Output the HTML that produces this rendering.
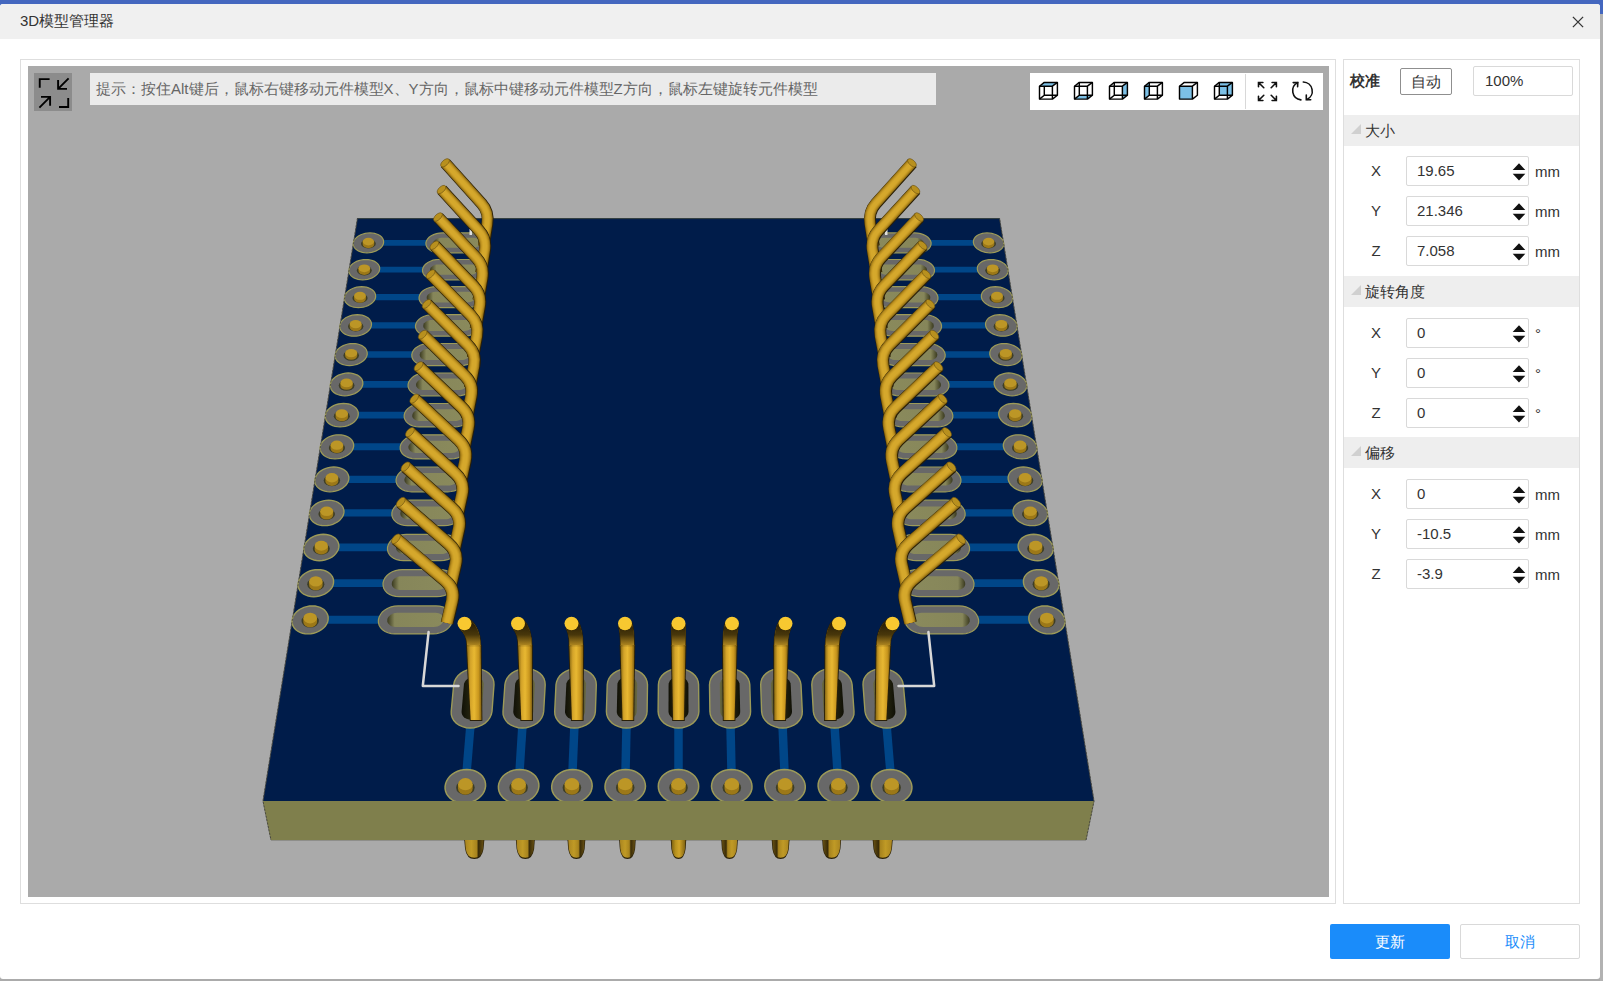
<!DOCTYPE html>
<html><head><meta charset="utf-8">
<style>
*{box-sizing:border-box}
html,body{margin:0;padding:0}
body{width:1603px;height:981px;overflow:hidden;position:relative;background:#ababab;font-family:"Liberation Sans",sans-serif;color:#333}
.abs{position:absolute}
.topbar{left:0;top:0;width:1603px;height:14px;background:#4467bf}
.dialog{left:0;top:4px;width:1600px;height:975px;background:#fff;border-radius:3px;overflow:hidden}
.titlebar{left:0;top:4px;width:1600px;height:34.5px;background:#f0f0f0;border-radius:3px 3px 0 0}
.title{left:20px;top:11px;font-size:15px;line-height:20px;color:#333;white-space:nowrap}
.lpanel{left:20px;top:59px;width:1316px;height:845px;border:1px solid #dedede}
.rpanel{left:1343px;top:59px;width:237px;height:845px;border:1px solid #dedede}
.view{left:28px;top:66px;width:1301px;height:831px;background:#aaaaaa;overflow:hidden}
.hint{left:90px;top:73px;width:846px;height:32px;overflow:hidden;background:#ebebeb;color:#666;font-size:15px;line-height:32px;padding-left:6px;white-space:nowrap}
.shrink{left:34px;top:73px;width:38px;height:38px;background:#8c8c8c}
.tools{left:1030px;top:73px;width:293px;height:37px;background:#fff}
.sep{left:1244.5px;top:74px;width:1.5px;height:35px;background:#d8d8d8}
.hdr{left:1344px;width:235px;height:31px;background:#eeeeee}
.hdrtxt{font-size:15px;line-height:31px;color:#333;white-space:nowrap}
.tri{width:0;height:0;border-left:10px solid transparent;border-bottom:10px solid #d0d0d0}
.lbl{font-size:15px;line-height:30px;color:#333;width:20px;text-align:center}
.inp{left:1406px;width:123px;height:30px;border:1px solid #d9d9d9;border-radius:2px;background:#fff;font-size:15px;line-height:28px;padding-left:10px;color:#333;white-space:nowrap}
.unit{left:1535px;font-size:15px;line-height:30px;color:#333}
.spin{left:1512px;width:15px;height:18px}
.btn1{left:1330px;top:924px;width:120px;height:35px;background:#1a8cfa;border-radius:2px;color:#fff;font-size:15px;line-height:35px;text-align:center}
.btn2{left:1460px;top:924px;width:120px;height:35px;background:#fff;border:1px solid #d9d9d9;border-radius:2px;color:#1a8cfa;font-size:15px;line-height:33px;text-align:center}
</style></head><body>
<div class="abs topbar"></div>
<div class="abs" style="left:1600px;top:14px;width:3px;height:967px;background:#b2b2b2"></div>
<div class="abs dialog"></div>
<div class="abs titlebar"></div>
<div class="abs title">3D模型管理器</div>
<svg class="abs" style="left:1570px;top:14px" width="16" height="16" viewBox="0 0 16 16"><path d="M2.9 2.9 L13.1 13.1 M13.1 2.9 L2.9 13.1" stroke="#333" stroke-width="1.3" fill="none"/></svg>
<div class="abs lpanel"></div>
<div class="abs rpanel"></div>
<div class="abs view"></div>
<svg width="1301" height="831" viewBox="28 66 1301 831" style="position:absolute;left:28px;top:66px"><defs>
<linearGradient id="holeL" x1="0" x2="1" y1="0" y2="0"><stop offset="0" stop-color="#3a3a20"/><stop offset="0.13" stop-color="#86865a"/><stop offset="1" stop-color="#8a8a5c"/></linearGradient>
<linearGradient id="holeR" x1="1" x2="0" y1="0" y2="0"><stop offset="0" stop-color="#3a3a20"/><stop offset="0.13" stop-color="#86865a"/><stop offset="1" stop-color="#8a8a5c"/></linearGradient>
<linearGradient id="holeV" x1="0" x2="1" y1="0" y2="0"><stop offset="0" stop-color="#1a1a08"/><stop offset="0.5" stop-color="#2a2a10"/><stop offset="1" stop-color="#6a6a40"/></linearGradient>
<linearGradient id="pinV" x1="0" x2="1" y1="0" y2="0"><stop offset="0" stop-color="#8a6a12"/><stop offset="0.25" stop-color="#d4a42a"/><stop offset="0.5" stop-color="#e8b832"/><stop offset="0.8" stop-color="#c8961e"/><stop offset="1" stop-color="#80600f"/></linearGradient>
<linearGradient id="pinTop" gradientUnits="userSpaceOnUse" x1="0" y1="624" x2="0" y2="648"><stop offset="0" stop-color="#2a1f06" stop-opacity="1"/><stop offset="0.45" stop-color="#3a2c08" stop-opacity="0.9"/><stop offset="1" stop-color="#3a2c08" stop-opacity="0"/></linearGradient>
<linearGradient id="stubL" x1="0" x2="1" y1="0" y2="0"><stop offset="0" stop-color="#a88420"/><stop offset="0.35" stop-color="#c09a26"/><stop offset="0.62" stop-color="#a8841e"/><stop offset="0.72" stop-color="#3a2c08"/><stop offset="1" stop-color="#6a5212"/></linearGradient>
<linearGradient id="stubR" x1="1" x2="0" y1="0" y2="0"><stop offset="0" stop-color="#a88420"/><stop offset="0.35" stop-color="#c09a26"/><stop offset="0.62" stop-color="#a8841e"/><stop offset="0.72" stop-color="#3a2c08"/><stop offset="1" stop-color="#6a5212"/></linearGradient>
<linearGradient id="stubC" x1="0" x2="1" y1="0" y2="0"><stop offset="0" stop-color="#7a5e10"/><stop offset="0.3" stop-color="#b8921e"/><stop offset="0.55" stop-color="#d0a428"/><stop offset="1" stop-color="#7a5e10"/></linearGradient>
<linearGradient id="hv0" x1="0" x2="1" y1="0" y2="0"><stop offset="0" stop-color="#101006"/><stop offset="0.5" stop-color="#2a2a12"/><stop offset="1" stop-color="#6a6a42"/></linearGradient><linearGradient id="hv1" x1="0" x2="1" y1="0" y2="0"><stop offset="0" stop-color="#101006"/><stop offset="0.5" stop-color="#2a2a12"/><stop offset="1" stop-color="#6a6a42"/></linearGradient><linearGradient id="hv2" x1="0" x2="1" y1="0" y2="0"><stop offset="0" stop-color="#101006"/><stop offset="0.5" stop-color="#2a2a12"/><stop offset="1" stop-color="#6a6a42"/></linearGradient><linearGradient id="hv3" x1="0" x2="1" y1="0" y2="0"><stop offset="0" stop-color="#101006"/><stop offset="0.5" stop-color="#2a2a12"/><stop offset="1" stop-color="#6a6a42"/></linearGradient><linearGradient id="hv4" x1="0" x2="1" y1="0" y2="0"><stop offset="0" stop-color="#101006"/><stop offset="0.5" stop-color="#2a2a12"/><stop offset="1" stop-color="#101006"/></linearGradient><linearGradient id="hv5" x1="0" x2="1" y1="0" y2="0"><stop offset="0" stop-color="#6a6a42"/><stop offset="0.5" stop-color="#2a2a12"/><stop offset="1" stop-color="#101006"/></linearGradient><linearGradient id="hv6" x1="0" x2="1" y1="0" y2="0"><stop offset="0" stop-color="#6a6a42"/><stop offset="0.5" stop-color="#2a2a12"/><stop offset="1" stop-color="#101006"/></linearGradient><linearGradient id="hv7" x1="0" x2="1" y1="0" y2="0"><stop offset="0" stop-color="#6a6a42"/><stop offset="0.5" stop-color="#2a2a12"/><stop offset="1" stop-color="#101006"/></linearGradient><linearGradient id="hv8" x1="0" x2="1" y1="0" y2="0"><stop offset="0" stop-color="#6a6a42"/><stop offset="0.5" stop-color="#2a2a12"/><stop offset="1" stop-color="#101006"/></linearGradient></defs><path d="M357.5 218.1 L999.5 218.1 L1094 801 L263 801Z" fill="#001c4a"/><path d="M263 801 L1094 801 L1086 840 L271 840Z" fill="#7f7f4c"/><path d="M357.5 218.1 L263 801 L271 840 L1086 840 L1094 801 L999.5 218.1" fill="none" stroke="#4a4a3a" stroke-width="0.8" opacity="0.7"/><line x1="358" y1="218.6" x2="999" y2="218.6" stroke="#485040" stroke-width="1" opacity="0.8"/><line x1="368.4" y1="242.8" x2="457.5" y2="242.8" stroke="#004688" stroke-width="5.7"/><line x1="364.3" y1="269.6" x2="454.5" y2="269.6" stroke="#004688" stroke-width="5.9"/><line x1="360" y1="297.1" x2="451.5" y2="297.1" stroke="#004688" stroke-width="6.1"/><line x1="355.7" y1="325.4" x2="448.4" y2="325.4" stroke="#004688" stroke-width="6.2"/><line x1="351.2" y1="354.5" x2="445.2" y2="354.5" stroke="#004688" stroke-width="6.4"/><line x1="346.6" y1="384.4" x2="441.9" y2="384.4" stroke="#004688" stroke-width="6.6"/><line x1="341.8" y1="415.1" x2="438.5" y2="415.1" stroke="#004688" stroke-width="6.8"/><line x1="336.9" y1="446.7" x2="435" y2="446.7" stroke="#004688" stroke-width="7"/><line x1="331.9" y1="479.3" x2="431.4" y2="479.3" stroke="#004688" stroke-width="7.2"/><line x1="326.7" y1="512.9" x2="427.7" y2="512.9" stroke="#004688" stroke-width="7.4"/><line x1="321.3" y1="547.4" x2="423.9" y2="547.4" stroke="#004688" stroke-width="7.6"/><line x1="315.8" y1="583.1" x2="420" y2="583.1" stroke="#004688" stroke-width="7.9"/><line x1="310.2" y1="619.8" x2="415.9" y2="619.8" stroke="#004688" stroke-width="8.1"/><line x1="988.6" y1="242.8" x2="899.5" y2="242.8" stroke="#004688" stroke-width="5.7"/><line x1="992.7" y1="269.6" x2="902.5" y2="269.6" stroke="#004688" stroke-width="5.9"/><line x1="997" y1="297.1" x2="905.5" y2="297.1" stroke="#004688" stroke-width="6.1"/><line x1="1001.3" y1="325.4" x2="908.6" y2="325.4" stroke="#004688" stroke-width="6.2"/><line x1="1005.8" y1="354.5" x2="911.8" y2="354.5" stroke="#004688" stroke-width="6.4"/><line x1="1010.4" y1="384.4" x2="915.1" y2="384.4" stroke="#004688" stroke-width="6.6"/><line x1="1015.2" y1="415.1" x2="918.5" y2="415.1" stroke="#004688" stroke-width="6.8"/><line x1="1020.1" y1="446.7" x2="922" y2="446.7" stroke="#004688" stroke-width="7"/><line x1="1025.1" y1="479.3" x2="925.6" y2="479.3" stroke="#004688" stroke-width="7.2"/><line x1="1030.3" y1="512.9" x2="929.3" y2="512.9" stroke="#004688" stroke-width="7.4"/><line x1="1035.7" y1="547.4" x2="933.1" y2="547.4" stroke="#004688" stroke-width="7.6"/><line x1="1041.2" y1="583.1" x2="937" y2="583.1" stroke="#004688" stroke-width="7.9"/><line x1="1046.8" y1="619.8" x2="941.1" y2="619.8" stroke="#004688" stroke-width="8.1"/><line x1="472.7" y1="698" x2="465.4" y2="786.2" stroke="#004688" stroke-width="8.5"/><line x1="524.2" y1="698" x2="518.6" y2="786.2" stroke="#004688" stroke-width="8.5"/><line x1="575.6" y1="698" x2="571.9" y2="786.2" stroke="#004688" stroke-width="8.5"/><line x1="627.1" y1="698" x2="625.2" y2="786.2" stroke="#004688" stroke-width="8.5"/><line x1="678.5" y1="698" x2="678.5" y2="786.2" stroke="#004688" stroke-width="8.5"/><line x1="729.9" y1="698" x2="731.8" y2="786.2" stroke="#004688" stroke-width="8.5"/><line x1="781.4" y1="698" x2="785.1" y2="786.2" stroke="#004688" stroke-width="8.5"/><line x1="832.8" y1="698" x2="838.4" y2="786.2" stroke="#004688" stroke-width="8.5"/><line x1="884.3" y1="698" x2="891.6" y2="786.2" stroke="#004688" stroke-width="8.5"/><path d="M383.6 242.8 L383.2 244.4 L382.4 245.9 L381.3 247.3 L379.8 248.7 L378.1 249.8 L376.1 250.9 L374 251.7 L371.7 252.3 L369.3 252.6 L366.9 252.8 L364.5 252.6 L362.3 252.3 L360.2 251.7 L358.3 250.9 L356.6 249.8 L355.2 248.7 L354.2 247.3 L353.5 245.9 L353.2 244.4 L353.3 242.8 L353.7 241.2 L354.5 239.7 L355.7 238.3 L357.1 237 L358.9 235.8 L360.8 234.8 L363 234 L365.2 233.4 L367.6 233 L370 232.9 L372.3 233 L374.6 233.4 L376.6 234 L378.5 234.8 L380.2 235.8 L381.6 237 L382.6 238.3 L383.3 239.7 L383.6 241.2Z" fill="#686868" stroke="#9c9a58" stroke-width="1.2"/><ellipse cx="368.4" cy="243.7" rx="7.4" ry="4.7" fill="#3e3e26"/><path d="M362.7 241.6 L362.7 244.3 A5.7 3.8 0 0 0 374.2 244.3 L374.2 241.6 Z" fill="#9c7818"/><ellipse cx="368.4" cy="241.6" rx="5.7" ry="3.8" fill="#bc9626"/><path d="M442.2 232.9 L439.3 233.1 L436.4 233.7 L433.6 234.6 L431.2 235.8 L429.1 237.3 L427.5 239 L426.4 240.9 L425.9 242.8 L426 244.7 L426.6 246.6 L427.8 248.3 L429.5 249.8 L431.6 251.1 L434.1 252 L436.9 252.6 L439.9 252.8 L472.2 252.8 L475.2 252.6 L478.1 252 L480.8 251.1 L483.3 249.8 L485.3 248.3 L486.9 246.6 L487.9 244.7 L488.4 242.8 L488.3 240.9 L487.6 239 L486.3 237.3 L484.6 235.8 L482.4 234.6 L479.9 233.7 L477.2 233.1 L474.2 232.9Z" fill="#686868" stroke="#9c9a58" stroke-width="1.2"/><path d="M441.6 237.8 L440.1 237.9 L438.7 238.2 L437.3 238.6 L436.1 239.3 L435 240 L434.2 240.9 L433.6 241.8 L433.4 242.8 L433.4 243.8 L433.7 244.7 L434.3 245.6 L435.2 246.4 L436.3 247 L437.6 247.5 L439 247.7 L440.5 247.8 L472.7 247.8 L474.2 247.7 L475.7 247.5 L477.1 247 L478.3 246.4 L479.3 245.6 L480.1 244.7 L480.7 243.8 L480.9 242.8 L480.8 241.8 L480.5 240.9 L479.9 240 L479 239.3 L477.9 238.6 L476.6 238.2 L475.2 237.9 L473.7 237.8Z" fill="url(#holeL)"/><path d="M379.6 269.6 L379.2 271.2 L378.4 272.8 L377.3 274.2 L375.8 275.6 L374.1 276.8 L372.1 277.9 L369.9 278.7 L367.6 279.3 L365.1 279.7 L362.7 279.8 L360.3 279.7 L358 279.3 L355.9 278.7 L354 277.9 L352.3 276.8 L350.9 275.6 L349.9 274.2 L349.2 272.8 L348.9 271.2 L349 269.6 L349.4 268 L350.2 266.5 L351.4 265 L352.8 263.6 L354.6 262.4 L356.6 261.4 L358.8 260.6 L361.1 260 L363.5 259.6 L365.9 259.5 L368.2 259.6 L370.5 260 L372.6 260.6 L374.6 261.4 L376.2 262.4 L377.6 263.6 L378.7 265 L379.4 266.5 L379.7 268Z" fill="#686868" stroke="#9c9a58" stroke-width="1.2"/><ellipse cx="364.3" cy="270.6" rx="7.5" ry="4.8" fill="#3e3e26"/><path d="M358.5 268.3 L358.5 271.1 A5.8 3.9 0 0 0 370.1 271.1 L370.1 268.3 Z" fill="#9c7818"/><ellipse cx="364.3" cy="268.3" rx="5.8" ry="3.9" fill="#bc9626"/><path d="M439.1 259.5 L436.1 259.7 L433.1 260.2 L430.4 261.2 L427.9 262.4 L425.8 264 L424.2 265.7 L423.1 267.6 L422.5 269.6 L422.6 271.6 L423.2 273.5 L424.4 275.3 L426.1 276.8 L428.3 278.1 L430.9 279.1 L433.7 279.6 L436.7 279.8 L469.4 279.8 L472.5 279.6 L475.4 279.1 L478.2 278.1 L480.6 276.8 L482.7 275.3 L484.3 273.5 L485.3 271.6 L485.8 269.6 L485.7 267.6 L485 265.7 L483.8 264 L482 262.4 L479.8 261.2 L477.3 260.2 L474.5 259.7 L471.5 259.5Z" fill="#686868" stroke="#9c9a58" stroke-width="1.2"/><path d="M438.5 264.5 L437 264.5 L435.5 264.8 L434.1 265.3 L432.8 266 L431.8 266.7 L430.9 267.6 L430.4 268.6 L430.1 269.6 L430.1 270.6 L430.5 271.6 L431.1 272.5 L431.9 273.3 L433 273.9 L434.3 274.4 L435.8 274.7 L437.3 274.8 L470 274.8 L471.5 274.7 L473 274.4 L474.4 273.9 L475.6 273.3 L476.7 272.5 L477.5 271.6 L478 270.6 L478.3 269.6 L478.2 268.6 L477.9 267.6 L477.2 266.7 L476.3 266 L475.2 265.3 L473.9 264.8 L472.5 264.5 L471 264.5Z" fill="url(#holeL)"/><path d="M375.6 297.1 L375.2 298.8 L374.4 300.4 L373.2 301.9 L371.7 303.3 L369.9 304.6 L367.9 305.6 L365.7 306.5 L363.3 307.1 L360.9 307.5 L358.4 307.6 L356 307.5 L353.7 307.1 L351.5 306.5 L349.5 305.6 L347.9 304.6 L346.5 303.3 L345.4 301.9 L344.7 300.4 L344.4 298.8 L344.5 297.1 L344.9 295.5 L345.8 293.9 L346.9 292.4 L348.4 291 L350.2 289.7 L352.2 288.7 L354.4 287.8 L356.8 287.2 L359.2 286.8 L361.7 286.7 L364.1 286.8 L366.4 287.2 L368.5 287.8 L370.5 288.7 L372.1 289.7 L373.5 291 L374.6 292.4 L375.3 293.9 L375.6 295.5Z" fill="#686868" stroke="#9c9a58" stroke-width="1.2"/><ellipse cx="360" cy="298.1" rx="7.6" ry="4.9" fill="#3e3e26"/><path d="M354.1 295.8 L354.1 298.7 A5.9 4 0 0 0 365.9 298.7 L365.9 295.8 Z" fill="#9c7818"/><ellipse cx="360" cy="295.8" rx="5.9" ry="4" fill="#bc9626"/><path d="M435.9 286.7 L432.8 286.9 L429.8 287.5 L427 288.5 L424.5 289.7 L422.4 291.3 L420.7 293.1 L419.6 295.1 L419.1 297.1 L419.1 299.2 L419.7 301.1 L421 303 L422.7 304.6 L424.9 305.9 L427.5 306.8 L430.3 307.4 L433.4 307.6 L466.6 307.6 L469.7 307.4 L472.7 306.8 L475.4 305.9 L477.9 304.6 L480 303 L481.7 301.1 L482.7 299.2 L483.2 297.1 L483.1 295.1 L482.4 293.1 L481.2 291.3 L479.4 289.7 L477.2 288.5 L474.6 287.5 L471.7 286.9 L468.7 286.7Z" fill="#686868" stroke="#9c9a58" stroke-width="1.2"/><path d="M435.2 291.8 L433.7 291.9 L432.2 292.2 L430.8 292.7 L429.5 293.4 L428.4 294.2 L427.6 295.1 L427 296.1 L426.7 297.1 L426.8 298.2 L427.1 299.2 L427.7 300.1 L428.6 300.9 L429.7 301.5 L431 302 L432.5 302.3 L434 302.4 L467.1 302.4 L468.7 302.3 L470.2 302 L471.6 301.5 L472.9 300.9 L473.9 300.1 L474.7 299.2 L475.3 298.2 L475.5 297.1 L475.5 296.1 L475.1 295.1 L474.5 294.2 L473.6 293.4 L472.5 292.7 L471.2 292.2 L469.7 291.9 L468.2 291.8Z" fill="url(#holeL)"/><path d="M371.4 325.4 L371 327.1 L370.2 328.7 L369 330.3 L367.5 331.7 L365.7 333 L363.6 334.1 L361.4 335 L359 335.7 L356.5 336.1 L354 336.2 L351.5 336.1 L349.2 335.7 L347 335 L345 334.1 L343.3 333 L341.9 331.7 L340.8 330.3 L340.1 328.7 L339.8 327.1 L339.9 325.4 L340.4 323.7 L341.2 322.1 L342.4 320.5 L343.9 319.1 L345.7 317.8 L347.8 316.7 L350 315.9 L352.4 315.2 L354.9 314.8 L357.3 314.7 L359.8 314.8 L362.1 315.2 L364.3 315.9 L366.2 316.7 L368 317.8 L369.4 319.1 L370.4 320.5 L371.2 322.1 L371.5 323.7Z" fill="#686868" stroke="#9c9a58" stroke-width="1.2"/><ellipse cx="355.7" cy="326.4" rx="7.7" ry="5.1" fill="#3e3e26"/><path d="M349.7 324.1 L349.7 327 A6 4.1 0 0 0 361.7 327 L361.7 324.1 Z" fill="#9c7818"/><ellipse cx="355.7" cy="324.1" rx="6" ry="4.1" fill="#bc9626"/><path d="M432.5 314.7 L429.5 314.9 L426.4 315.5 L423.6 316.5 L421.1 317.8 L418.9 319.4 L417.2 321.3 L416.1 323.3 L415.5 325.4 L415.5 327.5 L416.2 329.5 L417.4 331.4 L419.2 333 L421.4 334.4 L424 335.4 L426.9 336 L430 336.2 L463.7 336.2 L466.8 336 L469.8 335.4 L472.6 334.4 L475.2 333 L477.3 331.4 L478.9 329.5 L480 327.5 L480.5 325.4 L480.4 323.3 L479.7 321.3 L478.5 319.4 L476.7 317.8 L474.4 316.5 L471.8 315.5 L468.9 314.9 L465.9 314.7Z" fill="#686868" stroke="#9c9a58" stroke-width="1.2"/><path d="M431.9 320 L430.3 320.1 L428.8 320.4 L427.4 320.9 L426.1 321.6 L425 322.4 L424.1 323.3 L423.6 324.3 L423.3 325.4 L423.3 326.5 L423.6 327.5 L424.3 328.4 L425.2 329.3 L426.3 329.9 L427.6 330.4 L429.1 330.8 L430.6 330.9 L464.2 330.9 L465.8 330.8 L467.3 330.4 L468.8 329.9 L470 329.3 L471.1 328.4 L471.9 327.5 L472.5 326.5 L472.8 325.4 L472.7 324.3 L472.4 323.3 L471.7 322.4 L470.8 321.6 L469.7 320.9 L468.3 320.4 L466.9 320.1 L465.3 320Z" fill="url(#holeL)"/><path d="M367.2 354.5 L366.7 356.2 L365.9 357.9 L364.7 359.5 L363.1 361 L361.3 362.3 L359.2 363.5 L356.9 364.4 L354.5 365 L352 365.5 L349.5 365.6 L347 365.5 L344.6 365 L342.4 364.4 L340.3 363.5 L338.6 362.3 L337.2 361 L336.1 359.5 L335.4 357.9 L335.1 356.2 L335.2 354.5 L335.7 352.7 L336.5 351.1 L337.7 349.5 L339.3 348 L341.1 346.7 L343.2 345.6 L345.5 344.7 L347.9 344 L350.4 343.6 L352.9 343.5 L355.3 343.6 L357.7 344 L359.9 344.7 L361.9 345.6 L363.6 346.7 L365.1 348 L366.2 349.5 L366.9 351.1 L367.2 352.7Z" fill="#686868" stroke="#9c9a58" stroke-width="1.2"/><ellipse cx="351.2" cy="355.5" rx="7.8" ry="5.2" fill="#3e3e26"/><path d="M345.1 353.1 L345.1 356.1 A6.1 4.2 0 0 0 357.2 356.1 L357.2 353.1 Z" fill="#9c7818"/><ellipse cx="351.2" cy="353.1" rx="6.1" ry="4.2" fill="#bc9626"/><path d="M429.1 343.5 L426 343.7 L422.9 344.3 L420.1 345.3 L417.5 346.7 L415.3 348.3 L413.6 350.2 L412.4 352.3 L411.8 354.5 L411.9 356.6 L412.5 358.7 L413.8 360.6 L415.5 362.3 L417.8 363.7 L420.5 364.7 L423.4 365.4 L426.5 365.6 L460.7 365.6 L463.8 365.4 L466.9 364.7 L469.8 363.7 L472.3 362.3 L474.5 360.6 L476.2 358.7 L477.3 356.6 L477.8 354.5 L477.7 352.3 L477 350.2 L475.7 348.3 L473.9 346.7 L471.6 345.3 L468.9 344.3 L466 343.7 L462.9 343.5Z" fill="#686868" stroke="#9c9a58" stroke-width="1.2"/><path d="M428.5 348.9 L426.9 349 L425.3 349.3 L423.9 349.8 L422.6 350.5 L421.5 351.4 L420.6 352.3 L420 353.4 L419.7 354.5 L419.8 355.6 L420.1 356.6 L420.7 357.6 L421.6 358.4 L422.8 359.1 L424.1 359.7 L425.6 360 L427.2 360.1 L461.2 360.1 L462.8 360 L464.4 359.7 L465.8 359.1 L467.1 358.4 L468.2 357.6 L469.1 356.6 L469.6 355.6 L469.9 354.5 L469.8 353.4 L469.5 352.3 L468.8 351.4 L467.9 350.5 L466.8 349.8 L465.4 349.3 L463.9 349 L462.4 348.9Z" fill="url(#holeL)"/><path d="M362.8 384.4 L362.3 386.1 L361.5 387.9 L360.2 389.5 L358.7 391.1 L356.8 392.4 L354.7 393.6 L352.4 394.5 L349.9 395.2 L347.4 395.7 L344.8 395.8 L342.3 395.7 L339.8 395.2 L337.6 394.5 L335.6 393.6 L333.8 392.4 L332.4 391.1 L331.3 389.5 L330.6 387.9 L330.3 386.1 L330.3 384.4 L330.8 382.6 L331.7 380.8 L332.9 379.2 L334.5 377.7 L336.4 376.3 L338.5 375.2 L340.8 374.3 L343.2 373.6 L345.8 373.2 L348.3 373 L350.8 373.2 L353.2 373.6 L355.4 374.3 L357.5 375.2 L359.2 376.3 L360.7 377.7 L361.8 379.2 L362.5 380.8 L362.8 382.6Z" fill="#686868" stroke="#9c9a58" stroke-width="1.3"/><ellipse cx="346.6" cy="385.4" rx="7.9" ry="5.3" fill="#3e3e26"/><path d="M340.4 382.9 L340.4 386.1 A6.2 4.3 0 0 0 352.7 386.1 L352.7 382.9 Z" fill="#9c7818"/><ellipse cx="346.6" cy="382.9" rx="6.2" ry="4.3" fill="#bc9626"/><path d="M425.6 373 L422.5 373.3 L419.4 373.9 L416.4 374.9 L413.8 376.3 L411.6 378.1 L409.9 380 L408.7 382.1 L408.1 384.4 L408.1 386.6 L408.8 388.7 L410 390.7 L411.8 392.4 L414.1 393.9 L416.8 394.9 L419.8 395.6 L422.9 395.8 L457.6 395.8 L460.8 395.6 L463.9 394.9 L466.8 393.9 L469.4 392.4 L471.6 390.7 L473.3 388.7 L474.4 386.6 L474.9 384.4 L474.8 382.1 L474.1 380 L472.8 378.1 L471 376.3 L468.7 374.9 L466 373.9 L463 373.3 L459.9 373Z" fill="#686868" stroke="#9c9a58" stroke-width="1.2"/><path d="M425 378.6 L423.4 378.7 L421.8 379.1 L420.3 379.6 L419 380.3 L417.8 381.2 L417 382.2 L416.4 383.2 L416.1 384.4 L416.1 385.5 L416.4 386.6 L417.1 387.6 L418 388.4 L419.1 389.2 L420.5 389.7 L422 390 L423.6 390.1 L458.1 390.1 L459.8 390 L461.3 389.7 L462.8 389.2 L464.1 388.4 L465.2 387.6 L466.1 386.6 L466.7 385.5 L466.9 384.4 L466.9 383.2 L466.5 382.2 L465.9 381.2 L464.9 380.3 L463.8 379.6 L462.4 379.1 L460.9 378.7 L459.3 378.6Z" fill="url(#holeL)"/><path d="M358.2 415.1 L357.8 416.9 L356.9 418.7 L355.7 420.4 L354.1 422 L352.2 423.4 L350 424.6 L347.7 425.6 L345.2 426.3 L342.6 426.7 L340 426.9 L337.4 426.7 L335 426.3 L332.7 425.6 L330.6 424.6 L328.8 423.4 L327.4 422 L326.3 420.4 L325.6 418.7 L325.3 416.9 L325.4 415.1 L325.9 413.3 L326.7 411.5 L328 409.8 L329.6 408.2 L331.5 406.9 L333.6 405.7 L336 404.7 L338.5 404 L341 403.6 L343.6 403.5 L346.1 403.6 L348.6 404 L350.8 404.7 L352.9 405.7 L354.7 406.9 L356.1 408.2 L357.2 409.8 L358 411.5 L358.3 413.3Z" fill="#686868" stroke="#9c9a58" stroke-width="1.3"/><ellipse cx="341.8" cy="416.2" rx="8" ry="5.5" fill="#3e3e26"/><path d="M335.6 413.6 L335.6 416.9 A6.2 4.4 0 0 0 348 416.9 L348 413.6 Z" fill="#9c7818"/><ellipse cx="341.8" cy="413.6" rx="6.2" ry="4.4" fill="#bc9626"/><path d="M422 403.5 L418.8 403.7 L415.7 404.3 L412.7 405.4 L410 406.9 L407.8 408.6 L406 410.6 L404.8 412.8 L404.2 415.1 L404.2 417.4 L404.9 419.6 L406.2 421.6 L408 423.4 L410.3 424.9 L413 426 L416.1 426.6 L419.3 426.9 L454.4 426.9 L457.6 426.6 L460.8 426 L463.8 424.9 L466.4 423.4 L468.6 421.6 L470.4 419.6 L471.5 417.4 L472 415.1 L471.9 412.8 L471.2 410.6 L469.9 408.6 L468 406.9 L465.7 405.4 L463 404.3 L459.9 403.7 L456.8 403.5Z" fill="#686868" stroke="#9c9a58" stroke-width="1.2"/><path d="M421.3 409.2 L419.7 409.3 L418.1 409.6 L416.6 410.2 L415.3 410.9 L414.1 411.8 L413.2 412.8 L412.6 413.9 L412.3 415.1 L412.3 416.3 L412.7 417.4 L413.3 418.4 L414.2 419.3 L415.4 420 L416.8 420.6 L418.3 420.9 L419.9 421 L455 421 L456.6 420.9 L458.2 420.6 L459.7 420 L461.1 419.3 L462.2 418.4 L463.1 417.4 L463.6 416.3 L463.9 415.1 L463.9 413.9 L463.5 412.8 L462.8 411.8 L461.9 410.9 L460.7 410.2 L459.3 409.6 L457.8 409.3 L456.2 409.2Z" fill="url(#holeL)"/><path d="M353.6 446.7 L353.1 448.6 L352.2 450.5 L351 452.2 L349.4 453.8 L347.4 455.3 L345.2 456.5 L342.9 457.5 L340.3 458.3 L337.7 458.7 L335 458.9 L332.4 458.7 L329.9 458.3 L327.6 457.5 L325.5 456.5 L323.7 455.3 L322.3 453.8 L321.2 452.2 L320.4 450.5 L320.1 448.6 L320.2 446.7 L320.7 444.9 L321.6 443 L322.9 441.3 L324.5 439.7 L326.5 438.3 L328.6 437 L331 436.1 L333.5 435.3 L336.1 434.9 L338.8 434.8 L341.3 434.9 L343.8 435.3 L346.1 436.1 L348.2 437 L350 438.3 L351.5 439.7 L352.6 441.3 L353.3 443 L353.7 444.9Z" fill="#686868" stroke="#9c9a58" stroke-width="1.3"/><ellipse cx="336.9" cy="447.9" rx="8.1" ry="5.6" fill="#3e3e26"/><path d="M330.6 445.2 L330.6 448.5 A6.3 4.6 0 0 0 343.2 448.5 L343.2 445.2 Z" fill="#9c7818"/><ellipse cx="336.9" cy="445.2" rx="6.3" ry="4.6" fill="#bc9626"/><path d="M418.3 434.8 L415.1 435 L411.9 435.7 L408.9 436.8 L406.2 438.3 L403.9 440.1 L402.1 442.1 L400.8 444.4 L400.2 446.7 L400.2 449.1 L400.9 451.4 L402.2 453.5 L404 455.3 L406.4 456.8 L409.2 457.9 L412.2 458.6 L415.5 458.9 L451.1 458.9 L454.4 458.6 L457.6 457.9 L460.6 456.8 L463.3 455.3 L465.6 453.5 L467.3 451.4 L468.5 449.1 L469 446.7 L468.9 444.4 L468.2 442.1 L466.9 440.1 L465 438.3 L462.6 436.8 L459.8 435.7 L456.8 435 L453.6 434.8Z" fill="#686868" stroke="#9c9a58" stroke-width="1.2"/><path d="M417.6 440.7 L416 440.8 L414.3 441.1 L412.8 441.7 L411.4 442.4 L410.3 443.4 L409.4 444.4 L408.8 445.6 L408.4 446.7 L408.5 447.9 L408.8 449.1 L409.5 450.1 L410.4 451.1 L411.6 451.8 L413 452.4 L414.5 452.7 L416.2 452.9 L451.7 452.9 L453.4 452.7 L455 452.4 L456.5 451.8 L457.9 451.1 L459 450.1 L459.9 449.1 L460.5 447.9 L460.8 446.7 L460.8 445.6 L460.4 444.4 L459.7 443.4 L458.8 442.4 L457.6 441.7 L456.1 441.1 L454.6 440.8 L453 440.7Z" fill="url(#holeL)"/><path d="M348.8 479.3 L348.3 481.3 L347.4 483.2 L346.1 485 L344.5 486.6 L342.5 488.1 L340.3 489.4 L337.9 490.4 L335.3 491.2 L332.6 491.6 L329.9 491.8 L327.3 491.6 L324.8 491.2 L322.4 490.4 L320.3 489.4 L318.5 488.1 L317 486.6 L315.9 485 L315.1 483.2 L314.8 481.3 L314.9 479.3 L315.5 477.4 L316.4 475.5 L317.7 473.7 L319.3 472 L321.3 470.6 L323.5 469.3 L325.9 468.3 L328.5 467.6 L331.1 467.1 L333.8 467 L336.4 467.1 L338.9 467.6 L341.2 468.3 L343.3 469.3 L345.1 470.6 L346.7 472 L347.8 473.7 L348.5 475.5 L348.9 477.4Z" fill="#686868" stroke="#9c9a58" stroke-width="1.3"/><ellipse cx="331.9" cy="480.5" rx="8.2" ry="5.8" fill="#3e3e26"/><path d="M325.4 477.8 L325.4 481.2 A6.4 4.7 0 0 0 338.3 481.2 L338.3 477.8 Z" fill="#9c7818"/><ellipse cx="331.9" cy="477.8" rx="6.4" ry="4.7" fill="#bc9626"/><path d="M414.5 467 L411.2 467.2 L407.9 467.9 L404.9 469 L402.2 470.6 L399.8 472.4 L398 474.6 L396.7 476.9 L396.1 479.3 L396.1 481.7 L396.8 484.1 L398.1 486.2 L400 488.1 L402.4 489.7 L405.2 490.8 L408.3 491.5 L411.6 491.8 L447.7 491.8 L451.1 491.5 L454.3 490.8 L457.4 489.7 L460.1 488.1 L462.4 486.2 L464.2 484.1 L465.4 481.7 L465.9 479.3 L465.8 476.9 L465.1 474.6 L463.8 472.4 L461.8 470.6 L459.4 469 L456.6 467.9 L453.5 467.2 L450.3 467Z" fill="#686868" stroke="#9c9a58" stroke-width="1.2"/><path d="M413.8 473 L412.1 473.2 L410.5 473.5 L408.9 474.1 L407.5 474.9 L406.3 475.8 L405.4 476.9 L404.8 478.1 L404.5 479.3 L404.5 480.5 L404.8 481.7 L405.5 482.8 L406.4 483.8 L407.6 484.5 L409.1 485.1 L410.6 485.5 L412.3 485.6 L448.4 485.6 L450.1 485.5 L451.7 485.1 L453.3 484.5 L454.6 483.8 L455.8 482.8 L456.7 481.7 L457.3 480.5 L457.6 479.3 L457.5 478.1 L457.2 476.9 L456.5 475.8 L455.5 474.9 L454.3 474.1 L452.9 473.5 L451.3 473.2 L449.7 473Z" fill="url(#holeL)"/><path d="M343.9 512.9 L343.4 514.9 L342.4 516.8 L341.1 518.7 L339.5 520.4 L337.5 521.9 L335.2 523.2 L332.8 524.3 L330.1 525.1 L327.4 525.5 L324.7 525.7 L322 525.5 L319.5 525.1 L317.1 524.3 L314.9 523.2 L313.1 521.9 L311.6 520.4 L310.4 518.7 L309.7 516.8 L309.4 514.9 L309.5 512.9 L310 510.9 L311 508.9 L312.3 507.1 L314 505.4 L316 503.9 L318.2 502.6 L320.7 501.5 L323.3 500.8 L326 500.3 L328.7 500.2 L331.3 500.3 L333.8 500.8 L336.2 501.5 L338.3 502.6 L340.2 503.9 L341.7 505.4 L342.9 507.1 L343.6 508.9 L344 510.9Z" fill="#686868" stroke="#9c9a58" stroke-width="1.3"/><ellipse cx="326.7" cy="514.1" rx="8.3" ry="5.9" fill="#3e3e26"/><path d="M320.2 511.3 L320.2 514.8 A6.5 4.8 0 0 0 333.2 514.8 L333.2 511.3 Z" fill="#9c7818"/><ellipse cx="326.7" cy="511.3" rx="6.5" ry="4.8" fill="#bc9626"/><path d="M410.6 500.2 L407.2 500.4 L403.9 501.1 L400.8 502.3 L398 503.9 L395.7 505.8 L393.8 508 L392.5 510.4 L391.9 512.9 L391.9 515.4 L392.6 517.8 L393.9 520 L395.8 521.9 L398.2 523.5 L401.1 524.7 L404.2 525.5 L407.5 525.7 L444.3 525.7 L447.7 525.5 L451 524.7 L454.1 523.5 L456.9 521.9 L459.2 520 L461 517.8 L462.2 515.4 L462.8 512.9 L462.7 510.4 L461.9 508 L460.5 505.8 L458.6 503.9 L456.2 502.3 L453.3 501.1 L450.2 500.4 L446.9 500.2Z" fill="#686868" stroke="#9c9a58" stroke-width="1.2"/><path d="M409.8 506.4 L408.1 506.5 L406.5 506.9 L404.9 507.5 L403.5 508.3 L402.3 509.3 L401.3 510.4 L400.7 511.6 L400.4 512.9 L400.4 514.1 L400.7 515.3 L401.4 516.5 L402.4 517.4 L403.6 518.3 L405 518.9 L406.6 519.2 L408.3 519.3 L444.9 519.3 L446.6 519.2 L448.3 518.9 L449.9 518.3 L451.3 517.4 L452.5 516.5 L453.4 515.3 L454 514.1 L454.3 512.9 L454.2 511.6 L453.9 510.4 L453.2 509.3 L452.2 508.3 L451 507.5 L449.5 506.9 L447.9 506.5 L446.2 506.4Z" fill="url(#holeL)"/><path d="M338.8 547.4 L338.3 549.5 L337.3 551.5 L336 553.4 L334.3 555.2 L332.3 556.8 L330 558.1 L327.5 559.2 L324.8 560 L322.1 560.5 L319.3 560.7 L316.6 560.5 L314 560 L311.6 559.2 L309.4 558.1 L307.5 556.8 L306 555.2 L304.8 553.4 L304.1 551.5 L303.8 549.5 L303.9 547.4 L304.4 545.4 L305.4 543.4 L306.8 541.5 L308.5 539.7 L310.5 538.1 L312.8 536.8 L315.3 535.7 L317.9 535 L320.6 534.5 L323.4 534.3 L326.1 534.5 L328.6 535 L331 535.7 L333.2 536.8 L335.1 538.1 L336.6 539.7 L337.8 541.5 L338.5 543.4 L338.9 545.4Z" fill="#686868" stroke="#9c9a58" stroke-width="1.4"/><ellipse cx="321.3" cy="548.7" rx="8.5" ry="6.1" fill="#3e3e26"/><path d="M314.7 545.8 L314.7 549.4 A6.6 5 0 0 0 328 549.4 L328 545.8 Z" fill="#9c7818"/><ellipse cx="321.3" cy="545.8" rx="6.6" ry="5" fill="#bc9626"/><path d="M406.5 534.3 L403.1 534.6 L399.8 535.3 L396.6 536.5 L393.8 538.1 L391.4 540.1 L389.5 542.4 L388.2 544.9 L387.5 547.4 L387.5 550 L388.2 552.5 L389.6 554.8 L391.5 556.8 L393.9 558.4 L396.8 559.7 L400 560.4 L403.4 560.7 L440.7 560.7 L444.1 560.4 L447.5 559.7 L450.7 558.4 L453.5 556.8 L455.8 554.8 L457.7 552.5 L458.9 550 L459.5 547.4 L459.4 544.9 L458.6 542.4 L457.2 540.1 L455.3 538.1 L452.8 536.5 L449.9 535.3 L446.7 534.6 L443.4 534.3Z" fill="#686868" stroke="#9c9a58" stroke-width="1.2"/><path d="M405.8 540.8 L404 540.9 L402.3 541.3 L400.7 541.9 L399.3 542.7 L398.1 543.7 L397.1 544.9 L396.5 546.1 L396.1 547.4 L396.2 548.7 L396.5 550 L397.2 551.1 L398.2 552.1 L399.4 553 L400.9 553.6 L402.5 554 L404.2 554.1 L441.4 554.1 L443.1 554 L444.8 553.6 L446.4 553 L447.8 552.1 L449 551.1 L450 550 L450.6 548.7 L450.9 547.4 L450.8 546.1 L450.5 544.9 L449.8 543.7 L448.8 542.7 L447.5 541.9 L446 541.3 L444.4 540.9 L442.7 540.8Z" fill="url(#holeL)"/><path d="M333.5 583.1 L333 585.2 L332.1 587.3 L330.7 589.2 L329 591.1 L326.9 592.7 L324.6 594.1 L322 595.2 L319.3 596 L316.5 596.5 L313.7 596.7 L311 596.5 L308.3 596 L305.9 595.2 L303.7 594.1 L301.8 592.7 L300.2 591.1 L299.1 589.2 L298.3 587.3 L298 585.2 L298.1 583.1 L298.7 580.9 L299.7 578.9 L301 576.9 L302.8 575.1 L304.8 573.5 L307.2 572.1 L309.7 571 L312.4 570.2 L315.1 569.7 L317.9 569.6 L320.6 569.7 L323.3 570.2 L325.7 571 L327.9 572.1 L329.8 573.5 L331.3 575.1 L332.5 576.9 L333.3 578.9 L333.6 580.9Z" fill="#686868" stroke="#9c9a58" stroke-width="1.4"/><ellipse cx="315.8" cy="584.3" rx="8.6" ry="6.3" fill="#3e3e26"/><path d="M309.1 581.4 L309.1 585.1 A6.7 5.2 0 0 0 322.6 585.1 L322.6 581.4 Z" fill="#9c7818"/><ellipse cx="315.8" cy="581.4" rx="6.7" ry="5.2" fill="#bc9626"/><path d="M402.4 569.6 L398.9 569.8 L395.5 570.6 L392.3 571.8 L389.4 573.5 L387 575.5 L385 577.9 L383.7 580.4 L383 583.1 L383.1 585.7 L383.7 588.3 L385.1 590.6 L387 592.7 L389.5 594.4 L392.5 595.7 L395.7 596.4 L399.1 596.7 L437 596.7 L440.5 596.4 L443.9 595.7 L447.1 594.4 L450 592.7 L452.4 590.6 L454.3 588.3 L455.5 585.7 L456.1 583.1 L456 580.4 L455.3 577.9 L453.8 575.5 L451.8 573.5 L449.3 571.8 L446.4 570.6 L443.2 569.8 L439.8 569.6Z" fill="#686868" stroke="#9c9a58" stroke-width="1.2"/><path d="M401.6 576.2 L399.8 576.3 L398.1 576.7 L396.5 577.3 L395 578.2 L393.8 579.2 L392.8 580.4 L392.1 581.7 L391.8 583.1 L391.8 584.4 L392.1 585.7 L392.8 586.9 L393.8 587.9 L395.1 588.8 L396.6 589.4 L398.2 589.8 L399.9 589.9 L437.7 589.9 L439.5 589.8 L441.2 589.4 L442.8 588.8 L444.3 587.9 L445.5 586.9 L446.4 585.7 L447.1 584.4 L447.4 583.1 L447.3 581.7 L446.9 580.4 L446.2 579.2 L445.2 578.2 L444 577.3 L442.5 576.7 L440.8 576.3 L439.1 576.2Z" fill="url(#holeL)"/><path d="M328.1 619.8 L327.6 622 L326.6 624.1 L325.2 626.2 L323.5 628.1 L321.4 629.7 L319 631.2 L316.4 632.3 L313.7 633.2 L310.8 633.7 L308 633.9 L305.2 633.7 L302.5 633.2 L300 632.3 L297.8 631.2 L295.8 629.7 L294.3 628.1 L293.1 626.2 L292.3 624.1 L292 622 L292.2 619.8 L292.7 617.6 L293.7 615.5 L295.1 613.5 L296.9 611.6 L299 609.9 L301.4 608.5 L303.9 607.4 L306.7 606.6 L309.5 606 L312.3 605.9 L315.1 606 L317.7 606.6 L320.2 607.4 L322.4 608.5 L324.3 609.9 L325.9 611.6 L327.1 613.5 L327.9 615.5 L328.2 617.6Z" fill="#686868" stroke="#9c9a58" stroke-width="1.4"/><ellipse cx="310.2" cy="621.1" rx="8.7" ry="6.5" fill="#3e3e26"/><path d="M303.3 618.1 L303.3 621.9 A6.8 5.3 0 0 0 317 621.9 L317 618.1 Z" fill="#9c7818"/><ellipse cx="310.2" cy="618.1" rx="6.8" ry="5.3" fill="#bc9626"/><path d="M398.1 605.9 L394.5 606.1 L391.1 606.9 L387.8 608.2 L384.9 609.9 L382.4 612 L380.5 614.5 L379.1 617.1 L378.4 619.8 L378.4 622.5 L379.1 625.2 L380.5 627.6 L382.5 629.7 L385 631.5 L387.9 632.8 L391.2 633.6 L394.7 633.9 L433.2 633.9 L436.7 633.6 L440.2 632.8 L443.5 631.5 L446.4 629.7 L448.8 627.6 L450.7 625.2 L452 622.5 L452.6 619.8 L452.5 617.1 L451.8 614.5 L450.3 612 L448.3 609.9 L445.8 608.2 L442.8 606.9 L439.5 606.1 L436.1 605.9Z" fill="#686868" stroke="#9c9a58" stroke-width="1.2"/><path d="M397.2 612.7 L395.5 612.9 L393.7 613.3 L392.1 613.9 L390.6 614.8 L389.3 615.9 L388.3 617.1 L387.6 618.4 L387.3 619.8 L387.3 621.2 L387.7 622.5 L388.4 623.7 L389.4 624.8 L390.6 625.7 L392.1 626.4 L393.8 626.8 L395.6 626.9 L433.9 626.9 L435.7 626.8 L437.5 626.4 L439.1 625.7 L440.6 624.8 L441.8 623.7 L442.8 622.5 L443.4 621.2 L443.7 619.8 L443.7 618.4 L443.3 617.1 L442.6 615.9 L441.6 614.8 L440.3 613.9 L438.8 613.3 L437.1 612.9 L435.4 612.7Z" fill="url(#holeL)"/><path d="M1003.7 242.8 L1003.8 244.4 L1003.5 245.9 L1002.8 247.3 L1001.8 248.7 L1000.4 249.8 L998.7 250.9 L996.8 251.7 L994.7 252.3 L992.5 252.6 L990.1 252.8 L987.7 252.6 L985.3 252.3 L983 251.7 L980.9 250.9 L978.9 249.8 L977.2 248.7 L975.7 247.3 L974.6 245.9 L973.8 244.4 L973.4 242.8 L973.4 241.2 L973.7 239.7 L974.4 238.3 L975.4 237 L976.8 235.8 L978.5 234.8 L980.4 234 L982.4 233.4 L984.7 233 L987 232.9 L989.4 233 L991.8 233.4 L994 234 L996.2 234.8 L998.1 235.8 L999.9 237 L1001.3 238.3 L1002.5 239.7 L1003.3 241.2Z" fill="#686868" stroke="#9c9a58" stroke-width="1.2"/><ellipse cx="988.6" cy="243.7" rx="7.4" ry="4.7" fill="#3e3e26"/><path d="M982.8 241.6 L982.8 244.3 A5.7 3.8 0 0 0 994.3 244.3 L994.3 241.6 Z" fill="#9c7818"/><ellipse cx="988.6" cy="241.6" rx="5.7" ry="3.8" fill="#bc9626"/><path d="M882.8 232.9 L879.8 233.1 L877.1 233.7 L874.6 234.6 L872.4 235.8 L870.7 237.3 L869.4 239 L868.7 240.9 L868.6 242.8 L869.1 244.7 L870.1 246.6 L871.7 248.3 L873.7 249.8 L876.2 251.1 L878.9 252 L881.8 252.6 L884.8 252.8 L917.1 252.8 L920.1 252.6 L922.9 252 L925.4 251.1 L927.5 249.8 L929.2 248.3 L930.4 246.6 L931 244.7 L931.1 242.8 L930.6 240.9 L929.5 239 L927.9 237.3 L925.8 235.8 L923.4 234.6 L920.6 233.7 L917.7 233.1 L914.8 232.9Z" fill="#686868" stroke="#9c9a58" stroke-width="1.2"/><path d="M883.3 237.8 L881.8 237.9 L880.4 238.2 L879.1 238.6 L878 239.3 L877.1 240 L876.5 240.9 L876.2 241.8 L876.1 242.8 L876.3 243.8 L876.9 244.7 L877.7 245.6 L878.7 246.4 L879.9 247 L881.3 247.5 L882.8 247.7 L884.3 247.8 L916.5 247.8 L918 247.7 L919.4 247.5 L920.7 247 L921.8 246.4 L922.7 245.6 L923.3 244.7 L923.6 243.8 L923.6 242.8 L923.4 241.8 L922.8 240.9 L922 240 L920.9 239.3 L919.7 238.6 L918.3 238.2 L916.9 237.9 L915.4 237.8Z" fill="url(#holeR)"/><path d="M1008 269.6 L1008.1 271.2 L1007.8 272.8 L1007.1 274.2 L1006.1 275.6 L1004.7 276.8 L1003 277.9 L1001.1 278.7 L999 279.3 L996.7 279.7 L994.3 279.8 L991.9 279.7 L989.4 279.3 L987.1 278.7 L984.9 277.9 L982.9 276.8 L981.2 275.6 L979.7 274.2 L978.6 272.8 L977.8 271.2 L977.4 269.6 L977.3 268 L977.6 266.5 L978.3 265 L979.4 263.6 L980.8 262.4 L982.4 261.4 L984.4 260.6 L986.5 260 L988.8 259.6 L991.1 259.5 L993.5 259.6 L995.9 260 L998.2 260.6 L1000.4 261.4 L1002.4 262.4 L1004.2 263.6 L1005.6 265 L1006.8 266.5 L1007.6 268Z" fill="#686868" stroke="#9c9a58" stroke-width="1.2"/><ellipse cx="992.7" cy="270.6" rx="7.5" ry="4.8" fill="#3e3e26"/><path d="M986.9 268.3 L986.9 271.1 A5.8 3.9 0 0 0 998.5 271.1 L998.5 268.3 Z" fill="#9c7818"/><ellipse cx="992.7" cy="268.3" rx="5.8" ry="3.9" fill="#bc9626"/><path d="M885.5 259.5 L882.5 259.7 L879.7 260.2 L877.2 261.2 L875 262.4 L873.2 264 L872 265.7 L871.3 267.6 L871.2 269.6 L871.7 271.6 L872.7 273.5 L874.3 275.3 L876.4 276.8 L878.8 278.1 L881.6 279.1 L884.5 279.6 L887.6 279.8 L920.3 279.8 L923.3 279.6 L926.1 279.1 L928.7 278.1 L930.9 276.8 L932.6 275.3 L933.8 273.5 L934.4 271.6 L934.5 269.6 L933.9 267.6 L932.8 265.7 L931.2 264 L929.1 262.4 L926.6 261.2 L923.9 260.2 L920.9 259.7 L917.9 259.5Z" fill="#686868" stroke="#9c9a58" stroke-width="1.2"/><path d="M886 264.5 L884.5 264.5 L883.1 264.8 L881.8 265.3 L880.7 266 L879.8 266.7 L879.1 267.6 L878.8 268.6 L878.7 269.6 L879 270.6 L879.5 271.6 L880.3 272.5 L881.4 273.3 L882.6 273.9 L884 274.4 L885.5 274.7 L887 274.8 L919.7 274.8 L921.2 274.7 L922.7 274.4 L924 273.9 L925.1 273.3 L925.9 272.5 L926.5 271.6 L926.9 270.6 L926.9 269.6 L926.6 268.6 L926.1 267.6 L925.2 266.7 L924.2 266 L922.9 265.3 L921.5 264.8 L920 264.5 L918.5 264.5Z" fill="url(#holeR)"/><path d="M1012.5 297.1 L1012.6 298.8 L1012.3 300.4 L1011.6 301.9 L1010.5 303.3 L1009.1 304.6 L1007.5 305.6 L1005.5 306.5 L1003.3 307.1 L1001 307.5 L998.6 307.6 L996.1 307.5 L993.7 307.1 L991.3 306.5 L989.1 305.6 L987.1 304.6 L985.3 303.3 L983.8 301.9 L982.6 300.4 L981.8 298.8 L981.4 297.1 L981.4 295.5 L981.7 293.9 L982.4 292.4 L983.5 291 L984.9 289.7 L986.5 288.7 L988.5 287.8 L990.6 287.2 L992.9 286.8 L995.3 286.7 L997.8 286.8 L1000.2 287.2 L1002.6 287.8 L1004.8 288.7 L1006.8 289.7 L1008.6 291 L1010.1 292.4 L1011.2 293.9 L1012.1 295.5Z" fill="#686868" stroke="#9c9a58" stroke-width="1.2"/><ellipse cx="997" cy="298.1" rx="7.6" ry="4.9" fill="#3e3e26"/><path d="M991.1 295.8 L991.1 298.7 A5.9 4 0 0 0 1002.9 298.7 L1002.9 295.8 Z" fill="#9c7818"/><ellipse cx="997" cy="295.8" rx="5.9" ry="4" fill="#bc9626"/><path d="M888.3 286.7 L885.3 286.9 L882.4 287.5 L879.8 288.5 L877.6 289.7 L875.8 291.3 L874.6 293.1 L873.9 295.1 L873.8 297.1 L874.3 299.2 L875.3 301.1 L877 303 L879.1 304.6 L881.6 305.9 L884.3 306.8 L887.3 307.4 L890.4 307.6 L923.6 307.6 L926.7 307.4 L929.5 306.8 L932.1 305.9 L934.3 304.6 L936 303 L937.3 301.1 L937.9 299.2 L937.9 297.1 L937.4 295.1 L936.3 293.1 L934.6 291.3 L932.5 289.7 L930 288.5 L927.2 287.5 L924.2 286.9 L921.1 286.7Z" fill="#686868" stroke="#9c9a58" stroke-width="1.2"/><path d="M888.8 291.8 L887.3 291.9 L885.8 292.2 L884.5 292.7 L883.4 293.4 L882.5 294.2 L881.9 295.1 L881.5 296.1 L881.5 297.1 L881.7 298.2 L882.3 299.2 L883.1 300.1 L884.1 300.9 L885.4 301.5 L886.8 302 L888.3 302.3 L889.9 302.4 L923 302.4 L924.5 302.3 L926 302 L927.3 301.5 L928.4 300.9 L929.3 300.1 L929.9 299.2 L930.2 298.2 L930.3 297.1 L930 296.1 L929.4 295.1 L928.6 294.2 L927.5 293.4 L926.2 292.7 L924.8 292.2 L923.3 291.9 L921.8 291.8Z" fill="url(#holeR)"/><path d="M1017.1 325.4 L1017.2 327.1 L1016.9 328.7 L1016.2 330.3 L1015.1 331.7 L1013.7 333 L1012 334.1 L1010 335 L1007.8 335.7 L1005.5 336.1 L1003 336.2 L1000.5 336.1 L998 335.7 L995.6 335 L993.4 334.1 L991.3 333 L989.5 331.7 L988 330.3 L986.8 328.7 L986 327.1 L985.6 325.4 L985.5 323.7 L985.8 322.1 L986.6 320.5 L987.6 319.1 L989 317.8 L990.8 316.7 L992.7 315.9 L994.9 315.2 L997.2 314.8 L999.7 314.7 L1002.1 314.8 L1004.6 315.2 L1007 315.9 L1009.2 316.7 L1011.3 317.8 L1013.1 319.1 L1014.6 320.5 L1015.8 322.1 L1016.6 323.7Z" fill="#686868" stroke="#9c9a58" stroke-width="1.2"/><ellipse cx="1001.3" cy="326.4" rx="7.7" ry="5.1" fill="#3e3e26"/><path d="M995.3 324.1 L995.3 327 A6 4.1 0 0 0 1007.3 327 L1007.3 324.1 Z" fill="#9c7818"/><ellipse cx="1001.3" cy="324.1" rx="6" ry="4.1" fill="#bc9626"/><path d="M891.1 314.7 L888.1 314.9 L885.2 315.5 L882.6 316.5 L880.3 317.8 L878.5 319.4 L877.3 321.3 L876.6 323.3 L876.5 325.4 L877 327.5 L878.1 329.5 L879.7 331.4 L881.8 333 L884.4 334.4 L887.2 335.4 L890.2 336 L893.3 336.2 L927 336.2 L930.1 336 L933 335.4 L935.6 334.4 L937.8 333 L939.6 331.4 L940.8 329.5 L941.5 327.5 L941.5 325.4 L940.9 323.3 L939.8 321.3 L938.1 319.4 L935.9 317.8 L933.4 316.5 L930.6 315.5 L927.5 314.9 L924.5 314.7Z" fill="#686868" stroke="#9c9a58" stroke-width="1.2"/><path d="M891.7 320 L890.1 320.1 L888.7 320.4 L887.3 320.9 L886.2 321.6 L885.3 322.4 L884.6 323.3 L884.3 324.3 L884.2 325.4 L884.5 326.5 L885.1 327.5 L885.9 328.4 L887 329.3 L888.2 329.9 L889.7 330.4 L891.2 330.8 L892.8 330.9 L926.4 330.9 L927.9 330.8 L929.4 330.4 L930.7 329.9 L931.8 329.3 L932.7 328.4 L933.4 327.5 L933.7 326.5 L933.7 325.4 L933.4 324.3 L932.9 323.3 L932 322.4 L930.9 321.6 L929.6 320.9 L928.2 320.4 L926.7 320.1 L925.1 320Z" fill="url(#holeR)"/><path d="M1021.8 354.5 L1021.9 356.2 L1021.6 357.9 L1020.9 359.5 L1019.8 361 L1018.4 362.3 L1016.7 363.5 L1014.6 364.4 L1012.4 365 L1010 365.5 L1007.5 365.6 L1005 365.5 L1002.5 365 L1000.1 364.4 L997.8 363.5 L995.7 362.3 L993.9 361 L992.3 359.5 L991.1 357.9 L990.3 356.2 L989.8 354.5 L989.8 352.7 L990.1 351.1 L990.8 349.5 L991.9 348 L993.4 346.7 L995.1 345.6 L997.1 344.7 L999.3 344 L1001.7 343.6 L1004.1 343.5 L1006.6 343.6 L1009.1 344 L1011.5 344.7 L1013.8 345.6 L1015.9 346.7 L1017.7 348 L1019.3 349.5 L1020.5 351.1 L1021.3 352.7Z" fill="#686868" stroke="#9c9a58" stroke-width="1.2"/><ellipse cx="1005.8" cy="355.5" rx="7.8" ry="5.2" fill="#3e3e26"/><path d="M999.8 353.1 L999.8 356.1 A6.1 4.2 0 0 0 1011.9 356.1 L1011.9 353.1 Z" fill="#9c7818"/><ellipse cx="1005.8" cy="353.1" rx="6.1" ry="4.2" fill="#bc9626"/><path d="M894.1 343.5 L891 343.7 L888.1 344.3 L885.4 345.3 L883.1 346.7 L881.3 348.3 L880 350.2 L879.3 352.3 L879.2 354.5 L879.7 356.6 L880.8 358.7 L882.5 360.6 L884.7 362.3 L887.2 363.7 L890.1 364.7 L893.2 365.4 L896.3 365.6 L930.5 365.6 L933.6 365.4 L936.5 364.7 L939.2 363.7 L941.5 362.3 L943.2 360.6 L944.5 358.7 L945.1 356.6 L945.2 354.5 L944.6 352.3 L943.4 350.2 L941.7 348.3 L939.5 346.7 L936.9 345.3 L934.1 344.3 L931 343.7 L927.9 343.5Z" fill="#686868" stroke="#9c9a58" stroke-width="1.2"/><path d="M894.6 348.9 L893.1 349 L891.6 349.3 L890.2 349.8 L889.1 350.5 L888.2 351.4 L887.5 352.3 L887.2 353.4 L887.1 354.5 L887.4 355.6 L887.9 356.6 L888.8 357.6 L889.9 358.4 L891.2 359.1 L892.6 359.7 L894.2 360 L895.8 360.1 L929.8 360.1 L931.4 360 L932.9 359.7 L934.2 359.1 L935.4 358.4 L936.3 357.6 L936.9 356.6 L937.2 355.6 L937.3 354.5 L937 353.4 L936.4 352.3 L935.5 351.4 L934.4 350.5 L933.1 349.8 L931.7 349.3 L930.1 349 L928.5 348.9Z" fill="url(#holeR)"/><path d="M1026.7 384.4 L1026.7 386.1 L1026.4 387.9 L1025.7 389.5 L1024.6 391.1 L1023.2 392.4 L1021.4 393.6 L1019.4 394.5 L1017.2 395.2 L1014.7 395.7 L1012.2 395.8 L1009.6 395.7 L1007.1 395.2 L1004.6 394.5 L1002.3 393.6 L1000.2 392.4 L998.3 391.1 L996.8 389.5 L995.5 387.9 L994.7 386.1 L994.2 384.4 L994.2 382.6 L994.5 380.8 L995.2 379.2 L996.3 377.7 L997.8 376.3 L999.5 375.2 L1001.6 374.3 L1003.8 373.6 L1006.2 373.2 L1008.7 373 L1011.2 373.2 L1013.8 373.6 L1016.2 374.3 L1018.5 375.2 L1020.6 376.3 L1022.5 377.7 L1024.1 379.2 L1025.3 380.8 L1026.2 382.6Z" fill="#686868" stroke="#9c9a58" stroke-width="1.3"/><ellipse cx="1010.4" cy="385.4" rx="7.9" ry="5.3" fill="#3e3e26"/><path d="M1004.3 382.9 L1004.3 386.1 A6.2 4.3 0 0 0 1016.6 386.1 L1016.6 382.9 Z" fill="#9c7818"/><ellipse cx="1010.4" cy="382.9" rx="6.2" ry="4.3" fill="#bc9626"/><path d="M897.1 373 L894 373.3 L891 373.9 L888.3 374.9 L886 376.3 L884.2 378.1 L882.9 380 L882.2 382.1 L882.1 384.4 L882.6 386.6 L883.7 388.7 L885.4 390.7 L887.6 392.4 L890.2 393.9 L893.1 394.9 L896.2 395.6 L899.4 395.8 L934.1 395.8 L937.2 395.6 L940.2 394.9 L942.9 393.9 L945.2 392.4 L947 390.7 L948.2 388.7 L948.9 386.6 L948.9 384.4 L948.3 382.1 L947.1 380 L945.4 378.1 L943.2 376.3 L940.6 374.9 L937.6 373.9 L934.5 373.3 L931.4 373Z" fill="#686868" stroke="#9c9a58" stroke-width="1.2"/><path d="M897.7 378.6 L896.1 378.7 L894.6 379.1 L893.2 379.6 L892.1 380.3 L891.1 381.2 L890.5 382.2 L890.1 383.2 L890.1 384.4 L890.3 385.5 L890.9 386.6 L891.8 387.6 L892.9 388.4 L894.2 389.2 L895.7 389.7 L897.2 390 L898.9 390.1 L933.4 390.1 L935 390 L936.5 389.7 L937.9 389.2 L939 388.4 L939.9 387.6 L940.6 386.6 L940.9 385.5 L940.9 384.4 L940.6 383.2 L940 382.2 L939.2 381.2 L938 380.3 L936.7 379.6 L935.2 379.1 L933.6 378.7 L932 378.6Z" fill="url(#holeR)"/><path d="M1031.6 415.1 L1031.7 416.9 L1031.4 418.7 L1030.7 420.4 L1029.6 422 L1028.2 423.4 L1026.4 424.6 L1024.3 425.6 L1022 426.3 L1019.6 426.7 L1017 426.9 L1014.4 426.7 L1011.8 426.3 L1009.3 425.6 L1007 424.6 L1004.8 423.4 L1002.9 422 L1001.3 420.4 L1000.1 418.7 L999.2 416.9 L998.8 415.1 L998.7 413.3 L999 411.5 L999.8 409.8 L1000.9 408.2 L1002.3 406.9 L1004.1 405.7 L1006.2 404.7 L1008.4 404 L1010.9 403.6 L1013.4 403.5 L1016 403.6 L1018.5 404 L1021 404.7 L1023.4 405.7 L1025.5 406.9 L1027.4 408.2 L1029 409.8 L1030.3 411.5 L1031.1 413.3Z" fill="#686868" stroke="#9c9a58" stroke-width="1.3"/><ellipse cx="1015.2" cy="416.2" rx="8" ry="5.5" fill="#3e3e26"/><path d="M1009 413.6 L1009 416.9 A6.2 4.4 0 0 0 1021.4 416.9 L1021.4 413.6 Z" fill="#9c7818"/><ellipse cx="1015.2" cy="413.6" rx="6.2" ry="4.4" fill="#bc9626"/><path d="M900.2 403.5 L897.1 403.7 L894 404.3 L891.3 405.4 L889 406.9 L887.1 408.6 L885.8 410.6 L885.1 412.8 L885 415.1 L885.5 417.4 L886.6 419.6 L888.4 421.6 L890.6 423.4 L893.2 424.9 L896.2 426 L899.4 426.6 L902.6 426.9 L937.7 426.9 L940.9 426.6 L944 426 L946.7 424.9 L949 423.4 L950.8 421.6 L952.1 419.6 L952.8 417.4 L952.8 415.1 L952.2 412.8 L951 410.6 L949.2 408.6 L947 406.9 L944.3 405.4 L941.3 404.3 L938.2 403.7 L935 403.5Z" fill="#686868" stroke="#9c9a58" stroke-width="1.2"/><path d="M900.8 409.2 L899.2 409.3 L897.7 409.6 L896.3 410.2 L895.1 410.9 L894.2 411.8 L893.5 412.8 L893.1 413.9 L893.1 415.1 L893.4 416.3 L893.9 417.4 L894.8 418.4 L895.9 419.3 L897.3 420 L898.8 420.6 L900.4 420.9 L902 421 L937.1 421 L938.7 420.9 L940.2 420.6 L941.6 420 L942.8 419.3 L943.7 418.4 L944.3 417.4 L944.7 416.3 L944.7 415.1 L944.4 413.9 L943.8 412.8 L942.9 411.8 L941.7 410.9 L940.4 410.2 L938.9 409.6 L937.3 409.3 L935.7 409.2Z" fill="url(#holeR)"/><path d="M1036.8 446.7 L1036.9 448.6 L1036.6 450.5 L1035.8 452.2 L1034.7 453.8 L1033.3 455.3 L1031.5 456.5 L1029.4 457.5 L1027.1 458.3 L1024.6 458.7 L1022 458.9 L1019.3 458.7 L1016.7 458.3 L1014.1 457.5 L1011.8 456.5 L1009.6 455.3 L1007.6 453.8 L1006 452.2 L1004.8 450.5 L1003.9 448.6 L1003.4 446.7 L1003.3 444.9 L1003.7 443 L1004.4 441.3 L1005.5 439.7 L1007 438.3 L1008.8 437 L1010.9 436.1 L1013.2 435.3 L1015.7 434.9 L1018.2 434.8 L1020.9 434.9 L1023.5 435.3 L1026 436.1 L1028.4 437 L1030.5 438.3 L1032.5 439.7 L1034.1 441.3 L1035.4 443 L1036.3 444.9Z" fill="#686868" stroke="#9c9a58" stroke-width="1.3"/><ellipse cx="1020.1" cy="447.9" rx="8.1" ry="5.6" fill="#3e3e26"/><path d="M1013.8 445.2 L1013.8 448.5 A6.3 4.6 0 0 0 1026.4 448.5 L1026.4 445.2 Z" fill="#9c7818"/><ellipse cx="1020.1" cy="445.2" rx="6.3" ry="4.6" fill="#bc9626"/><path d="M903.4 434.8 L900.2 435 L897.2 435.7 L894.4 436.8 L892 438.3 L890.1 440.1 L888.8 442.1 L888.1 444.4 L888 446.7 L888.5 449.1 L889.7 451.4 L891.4 453.5 L893.7 455.3 L896.4 456.8 L899.4 457.9 L902.6 458.6 L905.9 458.9 L941.5 458.9 L944.8 458.6 L947.8 457.9 L950.6 456.8 L953 455.3 L954.8 453.5 L956.1 451.4 L956.8 449.1 L956.8 446.7 L956.2 444.4 L954.9 442.1 L953.1 440.1 L950.8 438.3 L948.1 436.8 L945.1 435.7 L941.9 435 L938.7 434.8Z" fill="#686868" stroke="#9c9a58" stroke-width="1.2"/><path d="M904 440.7 L902.4 440.8 L900.9 441.1 L899.4 441.7 L898.2 442.4 L897.3 443.4 L896.6 444.4 L896.2 445.6 L896.2 446.7 L896.5 447.9 L897.1 449.1 L898 450.1 L899.1 451.1 L900.5 451.8 L902 452.4 L903.6 452.7 L905.3 452.9 L940.8 452.9 L942.5 452.7 L944 452.4 L945.4 451.8 L946.6 451.1 L947.5 450.1 L948.2 449.1 L948.5 447.9 L948.6 446.7 L948.2 445.6 L947.6 444.4 L946.7 443.4 L945.6 442.4 L944.2 441.7 L942.7 441.1 L941 440.8 L939.4 440.7Z" fill="url(#holeR)"/><path d="M1042.1 479.3 L1042.2 481.3 L1041.9 483.2 L1041.1 485 L1040 486.6 L1038.5 488.1 L1036.7 489.4 L1034.6 490.4 L1032.2 491.2 L1029.7 491.6 L1027.1 491.8 L1024.4 491.6 L1021.7 491.2 L1019.1 490.4 L1016.7 489.4 L1014.5 488.1 L1012.5 486.6 L1010.9 485 L1009.6 483.2 L1008.7 481.3 L1008.2 479.3 L1008.1 477.4 L1008.5 475.5 L1009.2 473.7 L1010.3 472 L1011.9 470.6 L1013.7 469.3 L1015.8 468.3 L1018.1 467.6 L1020.6 467.1 L1023.2 467 L1025.9 467.1 L1028.5 467.6 L1031.1 468.3 L1033.5 469.3 L1035.7 470.6 L1037.7 472 L1039.3 473.7 L1040.6 475.5 L1041.5 477.4Z" fill="#686868" stroke="#9c9a58" stroke-width="1.3"/><ellipse cx="1025.1" cy="480.5" rx="8.2" ry="5.8" fill="#3e3e26"/><path d="M1018.7 477.8 L1018.7 481.2 A6.4 4.7 0 0 0 1031.6 481.2 L1031.6 477.8 Z" fill="#9c7818"/><ellipse cx="1025.1" cy="477.8" rx="6.4" ry="4.7" fill="#bc9626"/><path d="M906.7 467 L903.5 467.2 L900.4 467.9 L897.6 469 L895.2 470.6 L893.2 472.4 L891.9 474.6 L891.2 476.9 L891.1 479.3 L891.6 481.7 L892.8 484.1 L894.6 486.2 L896.9 488.1 L899.6 489.7 L902.7 490.8 L905.9 491.5 L909.3 491.8 L945.4 491.8 L948.7 491.5 L951.8 490.8 L954.6 489.7 L957 488.1 L958.9 486.2 L960.2 484.1 L960.9 481.7 L960.9 479.3 L960.3 476.9 L959 474.6 L957.2 472.4 L954.8 470.6 L952.1 469 L949.1 467.9 L945.8 467.2 L942.5 467Z" fill="#686868" stroke="#9c9a58" stroke-width="1.2"/><path d="M907.3 473 L905.7 473.2 L904.1 473.5 L902.7 474.1 L901.5 474.9 L900.5 475.8 L899.8 476.9 L899.5 478.1 L899.4 479.3 L899.7 480.5 L900.3 481.7 L901.2 482.8 L902.4 483.8 L903.7 484.5 L905.3 485.1 L906.9 485.5 L908.6 485.6 L944.7 485.6 L946.4 485.5 L947.9 485.1 L949.4 484.5 L950.6 483.8 L951.5 482.8 L952.2 481.7 L952.5 480.5 L952.5 479.3 L952.2 478.1 L951.6 476.9 L950.7 475.8 L949.5 474.9 L948.1 474.1 L946.5 473.5 L944.9 473.2 L943.2 473Z" fill="url(#holeR)"/><path d="M1047.5 512.9 L1047.6 514.9 L1047.3 516.8 L1046.6 518.7 L1045.4 520.4 L1043.9 521.9 L1042.1 523.2 L1039.9 524.3 L1037.5 525.1 L1035 525.5 L1032.3 525.7 L1029.6 525.5 L1026.9 525.1 L1024.2 524.3 L1021.8 523.2 L1019.5 521.9 L1017.5 520.4 L1015.9 518.7 L1014.6 516.8 L1013.6 514.9 L1013.1 512.9 L1013 510.9 L1013.4 508.9 L1014.1 507.1 L1015.3 505.4 L1016.8 503.9 L1018.7 502.6 L1020.8 501.5 L1023.2 500.8 L1025.7 500.3 L1028.3 500.2 L1031 500.3 L1033.7 500.8 L1036.3 501.5 L1038.8 502.6 L1041 503.9 L1043 505.4 L1044.7 507.1 L1046 508.9 L1047 510.9Z" fill="#686868" stroke="#9c9a58" stroke-width="1.3"/><ellipse cx="1030.3" cy="514.1" rx="8.3" ry="5.9" fill="#3e3e26"/><path d="M1023.8 511.3 L1023.8 514.8 A6.5 4.8 0 0 0 1036.8 514.8 L1036.8 511.3 Z" fill="#9c7818"/><ellipse cx="1030.3" cy="511.3" rx="6.5" ry="4.8" fill="#bc9626"/><path d="M910.1 500.2 L906.8 500.4 L903.7 501.1 L900.8 502.3 L898.4 503.9 L896.5 505.8 L895.1 508 L894.3 510.4 L894.2 512.9 L894.8 515.4 L896 517.8 L897.8 520 L900.1 521.9 L902.9 523.5 L906 524.7 L909.3 525.5 L912.7 525.7 L949.5 525.7 L952.8 525.5 L955.9 524.7 L958.8 523.5 L961.2 521.9 L963.1 520 L964.4 517.8 L965.1 515.4 L965.1 512.9 L964.5 510.4 L963.2 508 L961.3 505.8 L959 503.9 L956.2 502.3 L953.1 501.1 L949.8 500.4 L946.4 500.2Z" fill="#686868" stroke="#9c9a58" stroke-width="1.2"/><path d="M910.8 506.4 L909.1 506.5 L907.5 506.9 L906 507.5 L904.8 508.3 L903.8 509.3 L903.1 510.4 L902.8 511.6 L902.7 512.9 L903 514.1 L903.6 515.3 L904.5 516.5 L905.7 517.4 L907.1 518.3 L908.7 518.9 L910.4 519.2 L912.1 519.3 L948.7 519.3 L950.4 519.2 L952 518.9 L953.4 518.3 L954.6 517.4 L955.6 516.5 L956.3 515.3 L956.6 514.1 L956.6 512.9 L956.3 511.6 L955.7 510.4 L954.7 509.3 L953.5 508.3 L952.1 507.5 L950.5 506.9 L948.9 506.5 L947.2 506.4Z" fill="url(#holeR)"/><path d="M1053.1 547.4 L1053.2 549.5 L1052.9 551.5 L1052.2 553.4 L1051 555.2 L1049.5 556.8 L1047.6 558.1 L1045.4 559.2 L1043 560 L1040.4 560.5 L1037.7 560.7 L1034.9 560.5 L1032.2 560 L1029.5 559.2 L1027 558.1 L1024.7 556.8 L1022.7 555.2 L1021 553.4 L1019.7 551.5 L1018.7 549.5 L1018.2 547.4 L1018.1 545.4 L1018.5 543.4 L1019.2 541.5 L1020.4 539.7 L1021.9 538.1 L1023.8 536.8 L1026 535.7 L1028.4 535 L1030.9 534.5 L1033.6 534.3 L1036.4 534.5 L1039.1 535 L1041.7 535.7 L1044.2 536.8 L1046.5 538.1 L1048.5 539.7 L1050.2 541.5 L1051.6 543.4 L1052.6 545.4Z" fill="#686868" stroke="#9c9a58" stroke-width="1.4"/><ellipse cx="1035.7" cy="548.7" rx="8.5" ry="6.1" fill="#3e3e26"/><path d="M1029 545.8 L1029 549.4 A6.6 5 0 0 0 1042.3 549.4 L1042.3 545.8 Z" fill="#9c7818"/><ellipse cx="1035.7" cy="545.8" rx="6.6" ry="5" fill="#bc9626"/><path d="M913.6 534.3 L910.3 534.6 L907.1 535.3 L904.2 536.5 L901.7 538.1 L899.8 540.1 L898.4 542.4 L897.6 544.9 L897.5 547.4 L898.1 550 L899.3 552.5 L901.2 554.8 L903.5 556.8 L906.3 558.4 L909.5 559.7 L912.9 560.4 L916.3 560.7 L953.6 560.7 L957 560.4 L960.2 559.7 L963.1 558.4 L965.5 556.8 L967.4 554.8 L968.8 552.5 L969.5 550 L969.5 547.4 L968.8 544.9 L967.5 542.4 L965.6 540.1 L963.2 538.1 L960.4 536.5 L957.2 535.3 L953.9 534.6 L950.5 534.3Z" fill="#686868" stroke="#9c9a58" stroke-width="1.2"/><path d="M914.3 540.8 L912.6 540.9 L911 541.3 L909.5 541.9 L908.2 542.7 L907.2 543.7 L906.5 544.9 L906.2 546.1 L906.1 547.4 L906.4 548.7 L907 550 L908 551.1 L909.2 552.1 L910.6 553 L912.2 553.6 L913.9 554 L915.6 554.1 L952.8 554.1 L954.5 554 L956.1 553.6 L957.6 553 L958.8 552.1 L959.8 551.1 L960.5 550 L960.8 548.7 L960.9 547.4 L960.5 546.1 L959.9 544.9 L958.9 543.7 L957.7 542.7 L956.3 541.9 L954.7 541.3 L953 540.9 L951.2 540.8Z" fill="url(#holeR)"/><path d="M1058.9 583.1 L1059 585.2 L1058.7 587.3 L1057.9 589.2 L1056.8 591.1 L1055.2 592.7 L1053.3 594.1 L1051.1 595.2 L1048.7 596 L1046 596.5 L1043.3 596.7 L1040.5 596.5 L1037.7 596 L1035 595.2 L1032.4 594.1 L1030.1 592.7 L1028 591.1 L1026.3 589.2 L1024.9 587.3 L1024 585.2 L1023.5 583.1 L1023.4 580.9 L1023.7 578.9 L1024.5 576.9 L1025.7 575.1 L1027.2 573.5 L1029.1 572.1 L1031.3 571 L1033.7 570.2 L1036.4 569.7 L1039.1 569.6 L1041.9 569.7 L1044.6 570.2 L1047.3 571 L1049.8 572.1 L1052.2 573.5 L1054.2 575.1 L1056 576.9 L1057.3 578.9 L1058.3 580.9Z" fill="#686868" stroke="#9c9a58" stroke-width="1.4"/><ellipse cx="1041.2" cy="584.3" rx="8.6" ry="6.3" fill="#3e3e26"/><path d="M1034.4 581.4 L1034.4 585.1 A6.7 5.2 0 0 0 1047.9 585.1 L1047.9 581.4 Z" fill="#9c7818"/><ellipse cx="1041.2" cy="581.4" rx="6.7" ry="5.2" fill="#bc9626"/><path d="M917.2 569.6 L913.8 569.8 L910.6 570.6 L907.7 571.8 L905.2 573.5 L903.2 575.5 L901.7 577.9 L901 580.4 L900.9 583.1 L901.5 585.7 L902.7 588.3 L904.6 590.6 L907 592.7 L909.9 594.4 L913.1 595.7 L916.5 596.4 L920 596.7 L957.9 596.7 L961.3 596.4 L964.5 595.7 L967.5 594.4 L970 592.7 L971.9 590.6 L973.3 588.3 L973.9 585.7 L974 583.1 L973.3 580.4 L972 577.9 L970 575.5 L967.6 573.5 L964.7 571.8 L961.5 570.6 L958.1 569.8 L954.6 569.6Z" fill="#686868" stroke="#9c9a58" stroke-width="1.2"/><path d="M917.9 576.2 L916.2 576.3 L914.5 576.7 L913 577.3 L911.8 578.2 L910.8 579.2 L910.1 580.4 L909.7 581.7 L909.6 583.1 L909.9 584.4 L910.6 585.7 L911.5 586.9 L912.7 587.9 L914.2 588.8 L915.8 589.4 L917.5 589.8 L919.3 589.9 L957.1 589.9 L958.8 589.8 L960.4 589.4 L961.9 588.8 L963.2 587.9 L964.2 586.9 L964.9 585.7 L965.2 584.4 L965.2 583.1 L964.9 581.7 L964.2 580.4 L963.2 579.2 L962 578.2 L960.5 577.3 L958.9 576.7 L957.2 576.3 L955.4 576.2Z" fill="url(#holeR)"/><path d="M1064.8 619.8 L1065 622 L1064.7 624.1 L1063.9 626.2 L1062.7 628.1 L1061.2 629.7 L1059.2 631.2 L1057 632.3 L1054.5 633.2 L1051.8 633.7 L1049 633.9 L1046.2 633.7 L1043.3 633.2 L1040.6 632.3 L1038 631.2 L1035.6 629.7 L1033.5 628.1 L1031.8 626.2 L1030.4 624.1 L1029.4 622 L1028.9 619.8 L1028.8 617.6 L1029.1 615.5 L1029.9 613.5 L1031.1 611.6 L1032.7 609.9 L1034.6 608.5 L1036.8 607.4 L1039.3 606.6 L1041.9 606 L1044.7 605.9 L1047.5 606 L1050.3 606.6 L1053.1 607.4 L1055.6 608.5 L1058 609.9 L1060.1 611.6 L1061.9 613.5 L1063.3 615.5 L1064.3 617.6Z" fill="#686868" stroke="#9c9a58" stroke-width="1.4"/><ellipse cx="1046.8" cy="621.1" rx="8.7" ry="6.5" fill="#3e3e26"/><path d="M1040 618.1 L1040 621.9 A6.8 5.3 0 0 0 1053.7 621.9 L1053.7 618.1 Z" fill="#9c7818"/><ellipse cx="1046.8" cy="618.1" rx="6.8" ry="5.3" fill="#bc9626"/><path d="M920.9 605.9 L917.5 606.1 L914.2 606.9 L911.2 608.2 L908.7 609.9 L906.7 612 L905.2 614.5 L904.5 617.1 L904.4 619.8 L905 622.5 L906.3 625.2 L908.2 627.6 L910.6 629.7 L913.5 631.5 L916.8 632.8 L920.3 633.6 L923.8 633.9 L962.3 633.9 L965.8 633.6 L969.1 632.8 L972 631.5 L974.5 629.7 L976.5 627.6 L977.9 625.2 L978.6 622.5 L978.6 619.8 L977.9 617.1 L976.5 614.5 L974.6 612 L972.1 609.9 L969.2 608.2 L965.9 606.9 L962.5 606.1 L958.9 605.9Z" fill="#686868" stroke="#9c9a58" stroke-width="1.2"/><path d="M921.6 612.7 L919.9 612.9 L918.2 613.3 L916.7 613.9 L915.4 614.8 L914.4 615.9 L913.7 617.1 L913.3 618.4 L913.3 619.8 L913.6 621.2 L914.2 622.5 L915.2 623.7 L916.4 624.8 L917.9 625.7 L919.5 626.4 L921.3 626.8 L923.1 626.9 L961.4 626.9 L963.2 626.8 L964.9 626.4 L966.4 625.7 L967.6 624.8 L968.6 623.7 L969.3 622.5 L969.7 621.2 L969.7 619.8 L969.4 618.4 L968.7 617.1 L967.7 615.9 L966.4 614.8 L964.9 613.9 L963.3 613.3 L961.5 612.9 L959.8 612.7Z" fill="url(#holeR)"/><path d="M485.6 786.2 L485.1 788.8 L484.2 791.4 L482.8 793.9 L481 796.1 L478.7 798.2 L476.2 799.9 L473.3 801.3 L470.3 802.3 L467.1 803 L463.9 803.2 L460.8 803 L457.7 802.3 L454.8 801.3 L452.2 799.9 L450 798.2 L448.1 796.1 L446.6 793.9 L445.6 791.4 L445.1 788.8 L445.1 786.2 L445.6 783.6 L446.6 781 L448 778.6 L449.9 776.3 L452.1 774.3 L454.7 772.6 L457.5 771.3 L460.5 770.3 L463.6 769.7 L466.8 769.5 L469.9 769.7 L472.9 770.3 L475.7 771.3 L478.3 772.6 L480.6 774.3 L482.5 776.3 L484 778.6 L485 781 L485.5 783.6Z" fill="#686868" stroke="#9c9a58" stroke-width="1.5"/><ellipse cx="465.4" cy="787.7" rx="9.3" ry="7.3" fill="#3e3e26"/><path d="M458 784.2 L458 788.6 A7.3 6.1 0 0 0 472.7 788.6 L472.7 784.2 Z" fill="#9c7818"/><ellipse cx="465.4" cy="784.2" rx="7.3" ry="6.1" fill="#bc9626"/><path d="M494 684.7 L493.8 681.6 L492.9 678.6 L491.3 675.8 L489 673.4 L486.1 671.4 L482.7 669.9 L479.1 669 L475.2 668.7 L471.2 669 L467.4 669.9 L463.8 671.4 L460.6 673.4 L457.9 675.8 L455.8 678.6 L454.4 681.6 L453.7 684.7 L451.2 711.4 L451.3 714.6 L452.2 717.7 L453.8 720.6 L456.2 723.1 L459.1 725.2 L462.5 726.7 L466.2 727.7 L470.2 728 L474.2 727.7 L478.2 726.7 L481.8 725.2 L485.1 723.1 L487.8 720.6 L489.9 717.7 L491.3 714.6 L492 711.4Z" fill="#686868" stroke="#9c9a58" stroke-width="1.4"/><path d="M483.8 684.7 L483.7 683.2 L483.2 681.7 L482.4 680.3 L481.3 679.1 L479.9 678.2 L478.2 677.4 L476.4 677 L474.5 676.8 L472.6 677 L470.7 677.4 L468.9 678.2 L467.3 679.1 L466 680.3 L464.9 681.7 L464.2 683.2 L463.9 684.7 L461.6 711.4 L461.6 713 L462.1 714.5 L462.9 715.9 L464 717.2 L465.5 718.2 L467.1 718.9 L469 719.4 L470.9 719.5 L472.9 719.4 L474.8 718.9 L476.6 718.2 L478.2 717.2 L479.6 715.9 L480.6 714.5 L481.3 713 L481.6 711.4Z" fill="url(#hv0)"/><path d="M538.9 786.2 L538.5 788.8 L537.6 791.4 L536.2 793.9 L534.5 796.1 L532.3 798.2 L529.7 799.9 L526.9 801.3 L523.9 802.3 L520.8 803 L517.6 803.2 L514.4 803 L511.3 802.3 L508.4 801.3 L505.8 799.9 L503.5 798.2 L501.6 796.1 L500.1 793.9 L499 791.4 L498.5 788.8 L498.4 786.2 L498.8 783.6 L499.8 781 L501.1 778.6 L502.9 776.3 L505.1 774.3 L507.7 772.6 L510.4 771.3 L513.4 770.3 L516.5 769.7 L519.7 769.5 L522.8 769.7 L525.9 770.3 L528.7 771.3 L531.3 772.6 L533.6 774.3 L535.6 776.3 L537.1 778.6 L538.2 781 L538.8 783.6Z" fill="#686868" stroke="#9c9a58" stroke-width="1.5"/><ellipse cx="518.6" cy="787.7" rx="9.3" ry="7.3" fill="#3e3e26"/><path d="M511.3 784.2 L511.3 788.6 A7.3 6.1 0 0 0 525.9 788.6 L525.9 784.2 Z" fill="#9c7818"/><ellipse cx="518.6" cy="784.2" rx="7.3" ry="6.1" fill="#bc9626"/><path d="M545.2 684.7 L544.9 681.6 L544 678.6 L542.3 675.8 L539.9 673.4 L537 671.4 L533.6 669.9 L529.9 669 L526 668.7 L522.1 669 L518.3 669.9 L514.7 671.4 L511.5 673.4 L508.9 675.8 L506.8 678.6 L505.5 681.6 L504.9 684.7 L503 711.4 L503.1 714.6 L504.1 717.7 L505.8 720.6 L508.1 723.1 L511.1 725.2 L514.5 726.7 L518.3 727.7 L522.3 728 L526.3 727.7 L530.2 726.7 L533.8 725.2 L537.1 723.1 L539.8 720.6 L541.8 717.7 L543.1 714.6 L543.7 711.4Z" fill="#686868" stroke="#9c9a58" stroke-width="1.4"/><path d="M534.9 684.7 L534.8 683.2 L534.3 681.7 L533.5 680.3 L532.3 679.1 L530.9 678.2 L529.2 677.4 L527.4 677 L525.5 676.8 L523.6 677 L521.7 677.4 L519.9 678.2 L518.4 679.1 L517 680.3 L516 681.7 L515.4 683.2 L515.1 684.7 L513.3 711.4 L513.4 713 L513.9 714.5 L514.7 715.9 L515.9 717.2 L517.3 718.2 L519 718.9 L520.9 719.4 L522.8 719.5 L524.8 719.4 L526.7 718.9 L528.5 718.2 L530.1 717.2 L531.4 715.9 L532.4 714.5 L533.1 713 L533.4 711.4Z" fill="url(#hv1)"/><path d="M592.2 786.2 L591.8 788.8 L591 791.4 L589.7 793.9 L587.9 796.1 L585.8 798.2 L583.3 799.9 L580.5 801.3 L577.5 802.3 L574.4 803 L571.2 803.2 L568 803 L565 802.3 L562.1 801.3 L559.4 799.9 L557 798.2 L555.1 796.1 L553.5 793.9 L552.4 791.4 L551.8 788.8 L551.7 786.2 L552.1 783.6 L552.9 781 L554.3 778.6 L556 776.3 L558.2 774.3 L560.7 772.6 L563.4 771.3 L566.4 770.3 L569.5 769.7 L572.6 769.5 L575.8 769.7 L578.8 770.3 L581.7 771.3 L584.3 772.6 L586.7 774.3 L588.7 776.3 L590.2 778.6 L591.4 781 L592 783.6Z" fill="#686868" stroke="#9c9a58" stroke-width="1.5"/><ellipse cx="571.9" cy="787.7" rx="9.3" ry="7.3" fill="#3e3e26"/><path d="M564.6 784.2 L564.6 788.6 A7.3 6.1 0 0 0 579.2 788.6 L579.2 784.2 Z" fill="#9c7818"/><ellipse cx="571.9" cy="784.2" rx="7.3" ry="6.1" fill="#bc9626"/><path d="M596.3 684.7 L596 681.6 L595 678.6 L593.2 675.8 L590.8 673.4 L587.9 671.4 L584.5 669.9 L580.7 669 L576.8 668.7 L572.9 669 L569.1 669.9 L565.6 671.4 L562.5 673.4 L559.8 675.8 L557.9 678.6 L556.6 681.6 L556 684.7 L554.7 711.4 L554.9 714.6 L555.9 717.7 L557.7 720.6 L560.1 723.1 L563.1 725.2 L566.6 726.7 L570.4 727.7 L574.4 728 L578.4 727.7 L582.3 726.7 L585.9 725.2 L589 723.1 L591.7 720.6 L593.7 717.7 L594.9 714.6 L595.4 711.4Z" fill="#686868" stroke="#9c9a58" stroke-width="1.4"/><path d="M586.1 684.7 L586 683.2 L585.4 681.7 L584.6 680.3 L583.4 679.1 L581.9 678.2 L580.3 677.4 L578.4 677 L576.5 676.8 L574.6 677 L572.7 677.4 L570.9 678.2 L569.4 679.1 L568.1 680.3 L567.1 681.7 L566.5 683.2 L566.3 684.7 L565 711.4 L565.1 713 L565.7 714.5 L566.5 715.9 L567.7 717.2 L569.2 718.2 L570.9 718.9 L572.8 719.4 L574.7 719.5 L576.7 719.4 L578.6 718.9 L580.4 718.2 L581.9 717.2 L583.2 715.9 L584.2 714.5 L584.8 713 L585.1 711.4Z" fill="url(#hv2)"/><path d="M645.5 786.2 L645.2 788.8 L644.4 791.4 L643.1 793.9 L641.4 796.1 L639.3 798.2 L636.9 799.9 L634.1 801.3 L631.2 802.3 L628 803 L624.9 803.2 L621.7 803 L618.6 802.3 L615.7 801.3 L613 799.9 L610.6 798.2 L608.6 796.1 L607 793.9 L605.8 791.4 L605.1 788.8 L605 786.2 L605.3 783.6 L606.1 781 L607.4 778.6 L609.1 776.3 L611.2 774.3 L613.7 772.6 L616.4 771.3 L619.3 770.3 L622.4 769.7 L625.6 769.5 L628.7 769.7 L631.8 770.3 L634.7 771.3 L637.3 772.6 L639.7 774.3 L641.7 776.3 L643.4 778.6 L644.5 781 L645.2 783.6Z" fill="#686868" stroke="#9c9a58" stroke-width="1.5"/><ellipse cx="625.2" cy="787.7" rx="9.3" ry="7.3" fill="#3e3e26"/><path d="M617.9 784.2 L617.9 788.6 A7.3 6.1 0 0 0 632.5 788.6 L632.5 784.2 Z" fill="#9c7818"/><ellipse cx="625.2" cy="784.2" rx="7.3" ry="6.1" fill="#bc9626"/><path d="M647.5 684.7 L647.1 681.6 L646 678.6 L644.2 675.8 L641.8 673.4 L638.7 671.4 L635.3 669.9 L631.6 669 L627.7 668.7 L623.8 669 L620 669.9 L616.5 671.4 L613.4 673.4 L610.8 675.8 L608.9 678.6 L607.7 681.6 L607.2 684.7 L606.4 711.4 L606.7 714.6 L607.8 717.7 L609.6 720.6 L612.1 723.1 L615.1 725.2 L618.6 726.7 L622.4 727.7 L626.4 728 L630.4 727.7 L634.3 726.7 L637.9 725.2 L641 723.1 L643.6 720.6 L645.5 717.7 L646.7 714.6 L647.1 711.4Z" fill="#686868" stroke="#9c9a58" stroke-width="1.4"/><path d="M637.3 684.7 L637.1 683.2 L636.5 681.7 L635.7 680.3 L634.4 679.1 L633 678.2 L631.3 677.4 L629.4 677 L627.5 676.8 L625.6 677 L623.7 677.4 L622 678.2 L620.5 679.1 L619.2 680.3 L618.2 681.7 L617.6 683.2 L617.4 684.7 L616.8 711.4 L616.9 713 L617.4 714.5 L618.3 715.9 L619.6 717.2 L621.1 718.2 L622.8 718.9 L624.6 719.4 L626.6 719.5 L628.6 719.4 L630.5 718.9 L632.2 718.2 L633.8 717.2 L635 715.9 L636 714.5 L636.6 713 L636.8 711.4Z" fill="url(#hv3)"/><path d="M698.7 786.2 L698.5 788.8 L697.8 791.4 L696.6 793.9 L694.9 796.1 L692.9 798.2 L690.5 799.9 L687.7 801.3 L684.8 802.3 L681.7 803 L678.5 803.2 L675.3 803 L672.2 802.3 L669.3 801.3 L666.5 799.9 L664.1 798.2 L662.1 796.1 L660.4 793.9 L659.2 791.4 L658.5 788.8 L658.3 786.2 L658.5 783.6 L659.3 781 L660.5 778.6 L662.2 776.3 L664.3 774.3 L666.7 772.6 L669.4 771.3 L672.3 770.3 L675.4 769.7 L678.5 769.5 L681.6 769.7 L684.7 770.3 L687.6 771.3 L690.3 772.6 L692.7 774.3 L694.8 776.3 L696.5 778.6 L697.7 781 L698.5 783.6Z" fill="#686868" stroke="#9c9a58" stroke-width="1.5"/><ellipse cx="678.5" cy="787.7" rx="9.3" ry="7.3" fill="#3e3e26"/><path d="M671.2 784.2 L671.2 788.6 A7.3 6.1 0 0 0 685.8 788.6 L685.8 784.2 Z" fill="#9c7818"/><ellipse cx="678.5" cy="784.2" rx="7.3" ry="6.1" fill="#bc9626"/><path d="M698.6 684.7 L698.2 681.6 L697.1 678.6 L695.2 675.8 L692.7 673.4 L689.6 671.4 L686.2 669.9 L682.4 669 L678.5 668.7 L674.6 669 L670.8 669.9 L667.4 671.4 L664.3 673.4 L661.8 675.8 L659.9 678.6 L658.8 681.6 L658.4 684.7 L658.1 711.4 L658.5 714.6 L659.6 717.7 L661.5 720.6 L664 723.1 L667.1 725.2 L670.7 726.7 L674.5 727.7 L678.5 728 L682.5 727.7 L686.3 726.7 L689.9 725.2 L693 723.1 L695.5 720.6 L697.4 717.7 L698.5 714.6 L698.9 711.4Z" fill="#686868" stroke="#9c9a58" stroke-width="1.4"/><path d="M688.4 684.7 L688.2 683.2 L687.6 681.7 L686.7 680.3 L685.5 679.1 L684 678.2 L682.3 677.4 L680.4 677 L678.5 676.8 L676.6 677 L674.7 677.4 L673 678.2 L671.5 679.1 L670.3 680.3 L669.4 681.7 L668.8 683.2 L668.6 684.7 L668.5 711.4 L668.7 713 L669.2 714.5 L670.2 715.9 L671.4 717.2 L672.9 718.2 L674.7 718.9 L676.5 719.4 L678.5 719.5 L680.5 719.4 L682.3 718.9 L684.1 718.2 L685.6 717.2 L686.8 715.9 L687.8 714.5 L688.3 713 L688.5 711.4Z" fill="url(#hv4)"/><path d="M752 786.2 L751.9 788.8 L751.2 791.4 L750 793.9 L748.4 796.1 L746.4 798.2 L744 799.9 L741.3 801.3 L738.4 802.3 L735.3 803 L732.1 803.2 L729 803 L725.8 802.3 L722.9 801.3 L720.1 799.9 L717.7 798.2 L715.6 796.1 L713.9 793.9 L712.6 791.4 L711.8 788.8 L711.5 786.2 L711.8 783.6 L712.5 781 L713.6 778.6 L715.3 776.3 L717.3 774.3 L719.7 772.6 L722.3 771.3 L725.2 770.3 L728.3 769.7 L731.4 769.5 L734.6 769.7 L737.7 770.3 L740.6 771.3 L743.3 772.6 L745.8 774.3 L747.9 776.3 L749.6 778.6 L750.9 781 L751.7 783.6Z" fill="#686868" stroke="#9c9a58" stroke-width="1.5"/><ellipse cx="731.8" cy="787.7" rx="9.3" ry="7.3" fill="#3e3e26"/><path d="M724.5 784.2 L724.5 788.6 A7.3 6.1 0 0 0 739.1 788.6 L739.1 784.2 Z" fill="#9c7818"/><ellipse cx="731.8" cy="784.2" rx="7.3" ry="6.1" fill="#bc9626"/><path d="M749.8 684.7 L749.3 681.6 L748.1 678.6 L746.2 675.8 L743.6 673.4 L740.5 671.4 L737 669.9 L733.2 669 L729.3 668.7 L725.4 669 L721.7 669.9 L718.3 671.4 L715.2 673.4 L712.8 675.8 L711 678.6 L709.9 681.6 L709.5 684.7 L709.9 711.4 L710.3 714.6 L711.5 717.7 L713.4 720.6 L716 723.1 L719.1 725.2 L722.7 726.7 L726.6 727.7 L730.6 728 L734.6 727.7 L738.4 726.7 L741.9 725.2 L744.9 723.1 L747.4 720.6 L749.2 717.7 L750.3 714.6 L750.6 711.4Z" fill="#686868" stroke="#9c9a58" stroke-width="1.4"/><path d="M739.6 684.7 L739.4 683.2 L738.8 681.7 L737.8 680.3 L736.5 679.1 L735 678.2 L733.3 677.4 L731.4 677 L729.5 676.8 L727.6 677 L725.7 677.4 L724 678.2 L722.6 679.1 L721.3 680.3 L720.5 681.7 L719.9 683.2 L719.7 684.7 L720.2 711.4 L720.4 713 L721 714.5 L722 715.9 L723.2 717.2 L724.8 718.2 L726.5 718.9 L728.4 719.4 L730.4 719.5 L732.4 719.4 L734.2 718.9 L735.9 718.2 L737.4 717.2 L738.7 715.9 L739.6 714.5 L740.1 713 L740.2 711.4Z" fill="url(#hv5)"/><path d="M805.3 786.2 L805.2 788.8 L804.6 791.4 L803.5 793.9 L801.9 796.1 L800 798.2 L797.6 799.9 L794.9 801.3 L792 802.3 L789 803 L785.8 803.2 L782.6 803 L779.5 802.3 L776.5 801.3 L773.7 799.9 L771.2 798.2 L769.1 796.1 L767.3 793.9 L766 791.4 L765.2 788.8 L764.8 786.2 L765 783.6 L765.6 781 L766.8 778.6 L768.3 776.3 L770.3 774.3 L772.7 772.6 L775.3 771.3 L778.2 770.3 L781.2 769.7 L784.4 769.5 L787.5 769.7 L790.6 770.3 L793.6 771.3 L796.3 772.6 L798.8 774.3 L801 776.3 L802.7 778.6 L804.1 781 L804.9 783.6Z" fill="#686868" stroke="#9c9a58" stroke-width="1.5"/><ellipse cx="785.1" cy="787.7" rx="9.3" ry="7.3" fill="#3e3e26"/><path d="M777.8 784.2 L777.8 788.6 A7.3 6.1 0 0 0 792.4 788.6 L792.4 784.2 Z" fill="#9c7818"/><ellipse cx="785.1" cy="784.2" rx="7.3" ry="6.1" fill="#bc9626"/><path d="M801 684.7 L800.4 681.6 L799.1 678.6 L797.2 675.8 L794.5 673.4 L791.4 671.4 L787.9 669.9 L784.1 669 L780.2 668.7 L776.3 669 L772.5 669.9 L769.1 671.4 L766.2 673.4 L763.8 675.8 L762 678.6 L761 681.6 L760.7 684.7 L761.6 711.4 L762.1 714.6 L763.3 717.7 L765.3 720.6 L768 723.1 L771.1 725.2 L774.7 726.7 L778.6 727.7 L782.6 728 L786.6 727.7 L790.4 726.7 L793.9 725.2 L796.9 723.1 L799.3 720.6 L801.1 717.7 L802.1 714.6 L802.3 711.4Z" fill="#686868" stroke="#9c9a58" stroke-width="1.4"/><path d="M790.7 684.7 L790.5 683.2 L789.9 681.7 L788.9 680.3 L787.6 679.1 L786.1 678.2 L784.3 677.4 L782.4 677 L780.5 676.8 L778.6 677 L776.7 677.4 L775.1 678.2 L773.6 679.1 L772.4 680.3 L771.6 681.7 L771 683.2 L770.9 684.7 L771.9 711.4 L772.2 713 L772.8 714.5 L773.8 715.9 L775.1 717.2 L776.6 718.2 L778.4 718.9 L780.3 719.4 L782.3 719.5 L784.2 719.4 L786.1 718.9 L787.8 718.2 L789.3 717.2 L790.5 715.9 L791.3 714.5 L791.9 713 L792 711.4Z" fill="url(#hv6)"/><path d="M858.6 786.2 L858.5 788.8 L858 791.4 L856.9 793.9 L855.4 796.1 L853.5 798.2 L851.2 799.9 L848.6 801.3 L845.7 802.3 L842.6 803 L839.4 803.2 L836.2 803 L833.1 802.3 L830.1 801.3 L827.3 799.9 L824.7 798.2 L822.5 796.1 L820.8 793.9 L819.4 791.4 L818.5 788.8 L818.1 786.2 L818.2 783.6 L818.8 781 L819.9 778.6 L821.4 776.3 L823.4 774.3 L825.7 772.6 L828.3 771.3 L831.1 770.3 L834.2 769.7 L837.3 769.5 L840.5 769.7 L843.6 770.3 L846.6 771.3 L849.3 772.6 L851.9 774.3 L854.1 776.3 L855.9 778.6 L857.2 781 L858.2 783.6Z" fill="#686868" stroke="#9c9a58" stroke-width="1.5"/><ellipse cx="838.4" cy="787.7" rx="9.3" ry="7.3" fill="#3e3e26"/><path d="M831.1 784.2 L831.1 788.6 A7.3 6.1 0 0 0 845.7 788.6 L845.7 784.2 Z" fill="#9c7818"/><ellipse cx="838.4" cy="784.2" rx="7.3" ry="6.1" fill="#bc9626"/><path d="M852.1 684.7 L851.5 681.6 L850.2 678.6 L848.1 675.8 L845.5 673.4 L842.3 671.4 L838.7 669.9 L834.9 669 L831 668.7 L827.1 669 L823.4 669.9 L820 671.4 L817.1 673.4 L814.7 675.8 L813 678.6 L812.1 681.6 L811.8 684.7 L813.3 711.4 L813.9 714.6 L815.2 717.7 L817.2 720.6 L819.9 723.1 L823.2 725.2 L826.8 726.7 L830.7 727.7 L834.7 728 L838.7 727.7 L842.5 726.7 L845.9 725.2 L848.9 723.1 L851.2 720.6 L852.9 717.7 L853.9 714.6 L854 711.4Z" fill="#686868" stroke="#9c9a58" stroke-width="1.4"/><path d="M841.9 684.7 L841.6 683.2 L841 681.7 L840 680.3 L838.6 679.1 L837.1 678.2 L835.3 677.4 L833.4 677 L831.5 676.8 L829.6 677 L827.8 677.4 L826.1 678.2 L824.7 679.1 L823.5 680.3 L822.7 681.7 L822.2 683.2 L822.1 684.7 L823.6 711.4 L823.9 713 L824.6 714.5 L825.6 715.9 L826.9 717.2 L828.5 718.2 L830.3 718.9 L832.2 719.4 L834.2 719.5 L836.1 719.4 L838 718.9 L839.7 718.2 L841.1 717.2 L842.3 715.9 L843.1 714.5 L843.6 713 L843.7 711.4Z" fill="url(#hv7)"/><path d="M911.9 786.2 L911.9 788.8 L911.4 791.4 L910.4 793.9 L908.9 796.1 L907 798.2 L904.8 799.9 L902.2 801.3 L899.3 802.3 L896.2 803 L893.1 803.2 L889.9 803 L886.7 802.3 L883.7 801.3 L880.8 799.9 L878.3 798.2 L876 796.1 L874.2 793.9 L872.8 791.4 L871.9 788.8 L871.4 786.2 L871.5 783.6 L872 781 L873 778.6 L874.5 776.3 L876.4 774.3 L878.7 772.6 L881.3 771.3 L884.1 770.3 L887.1 769.7 L890.2 769.5 L893.4 769.7 L896.5 770.3 L899.5 771.3 L902.3 772.6 L904.9 774.3 L907.1 776.3 L909 778.6 L910.4 781 L911.4 783.6Z" fill="#686868" stroke="#9c9a58" stroke-width="1.5"/><ellipse cx="891.6" cy="787.7" rx="9.3" ry="7.3" fill="#3e3e26"/><path d="M884.3 784.2 L884.3 788.6 A7.3 6.1 0 0 0 899 788.6 L899 784.2 Z" fill="#9c7818"/><ellipse cx="891.6" cy="784.2" rx="7.3" ry="6.1" fill="#bc9626"/><path d="M903.3 684.7 L902.6 681.6 L901.2 678.6 L899.1 675.8 L896.4 673.4 L893.2 671.4 L889.6 669.9 L885.8 669 L881.8 668.7 L877.9 669 L874.3 669.9 L870.9 671.4 L868 673.4 L865.7 675.8 L864.1 678.6 L863.2 681.6 L863 684.7 L865 711.4 L865.7 714.6 L867.1 717.7 L869.2 720.6 L871.9 723.1 L875.2 725.2 L878.8 726.7 L882.8 727.7 L886.8 728 L890.8 727.7 L894.5 726.7 L897.9 725.2 L900.8 723.1 L903.2 720.6 L904.8 717.7 L905.7 714.6 L905.8 711.4Z" fill="#686868" stroke="#9c9a58" stroke-width="1.4"/><path d="M893.1 684.7 L892.8 683.2 L892.1 681.7 L891 680.3 L889.7 679.1 L888.1 678.2 L886.3 677.4 L884.4 677 L882.5 676.8 L880.6 677 L878.8 677.4 L877.1 678.2 L875.7 679.1 L874.6 680.3 L873.8 681.7 L873.3 683.2 L873.2 684.7 L875.4 711.4 L875.7 713 L876.4 714.5 L877.4 715.9 L878.8 717.2 L880.4 718.2 L882.2 718.9 L884.1 719.4 L886.1 719.5 L888 719.4 L889.9 718.9 L891.5 718.2 L893 717.2 L894.1 715.9 L894.9 714.5 L895.4 713 L895.4 711.4Z" fill="url(#hv8)"/><path d="M428.6 632 L422.8 686 L458.5 686" fill="none" stroke="#d8d8d8" stroke-width="2.5" stroke-linecap="round" stroke-linejoin="round"/><path d="M928.4 632 L934.2 686 L898.5 686" fill="none" stroke="#d8d8d8" stroke-width="2.5" stroke-linecap="round" stroke-linejoin="round"/><rect x="469.5" y="229" width="2.5" height="6" fill="#e0e0e0"/><rect x="885" y="229" width="2.5" height="6" fill="#e0e0e0"/><path d="M445 162.8 L481.5 203.5 Q489 211.8 487 224 L483.5 245.8" fill="none" stroke="#2a1f06" stroke-width="11.9" stroke-linejoin="round" transform="translate(0.3,0.3)"/><path d="M445 162.8 L481.5 203.5 Q489 211.8 487 224 L483.5 245.8" fill="none" stroke="#8e6c14" stroke-width="10.6" stroke-linejoin="round"/><path d="M445 162.8 L481.5 203.5 Q489 211.8 487 224 L483.5 245.8" fill="none" stroke="#aa821a" stroke-width="9.1" stroke-linejoin="round"/><path d="M445 162.8 L481.5 203.5 Q489 211.8 487 224 L483.5 245.8" fill="none" stroke="#bf9322" stroke-width="7.6" stroke-linejoin="round"/><path d="M445 162.8 L481.5 203.5 Q489 211.8 487 224 L483.5 245.8" fill="none" stroke="#cda028" stroke-width="5.9" stroke-linejoin="round"/><path d="M445 162.8 L481.5 203.5 Q489 211.8 487 224 L483.5 245.8" fill="none" stroke="#d5a82c" stroke-width="4" stroke-linejoin="round"/><ellipse cx="445" cy="162.8" rx="2.8" ry="5.3" fill="#b8901e" stroke="#6a5010" stroke-width="0.6" transform="rotate(48.1 445 162.8)"/><path d="M912 162.8 L875.5 203.5 Q868 211.8 870 224 L873.5 245.8" fill="none" stroke="#2a1f06" stroke-width="11.9" stroke-linejoin="round" transform="translate(0.3,0.3)"/><path d="M912 162.8 L875.5 203.5 Q868 211.8 870 224 L873.5 245.8" fill="none" stroke="#8e6c14" stroke-width="10.6" stroke-linejoin="round"/><path d="M912 162.8 L875.5 203.5 Q868 211.8 870 224 L873.5 245.8" fill="none" stroke="#aa821a" stroke-width="9.1" stroke-linejoin="round"/><path d="M912 162.8 L875.5 203.5 Q868 211.8 870 224 L873.5 245.8" fill="none" stroke="#bf9322" stroke-width="7.6" stroke-linejoin="round"/><path d="M912 162.8 L875.5 203.5 Q868 211.8 870 224 L873.5 245.8" fill="none" stroke="#cda028" stroke-width="5.9" stroke-linejoin="round"/><path d="M912 162.8 L875.5 203.5 Q868 211.8 870 224 L873.5 245.8" fill="none" stroke="#d5a82c" stroke-width="4" stroke-linejoin="round"/><ellipse cx="912" cy="162.8" rx="2.8" ry="5.3" fill="#b8901e" stroke="#6a5010" stroke-width="0.6" transform="rotate(131.9 912 162.8)"/><path d="M441.5 189.5 L478.9 230.3 Q486.6 238.6 484.5 250.8 L480.9 272.6" fill="none" stroke="#2a1f06" stroke-width="12" stroke-linejoin="round" transform="translate(0.3,0.3)"/><path d="M441.5 189.5 L478.9 230.3 Q486.6 238.6 484.5 250.8 L480.9 272.6" fill="none" stroke="#8e6c14" stroke-width="10.7" stroke-linejoin="round"/><path d="M441.5 189.5 L478.9 230.3 Q486.6 238.6 484.5 250.8 L480.9 272.6" fill="none" stroke="#aa821a" stroke-width="9.2" stroke-linejoin="round"/><path d="M441.5 189.5 L478.9 230.3 Q486.6 238.6 484.5 250.8 L480.9 272.6" fill="none" stroke="#bf9322" stroke-width="7.7" stroke-linejoin="round"/><path d="M441.5 189.5 L478.9 230.3 Q486.6 238.6 484.5 250.8 L480.9 272.6" fill="none" stroke="#cda028" stroke-width="6" stroke-linejoin="round"/><path d="M441.5 189.5 L478.9 230.3 Q486.6 238.6 484.5 250.8 L480.9 272.6" fill="none" stroke="#d5a82c" stroke-width="4.1" stroke-linejoin="round"/><ellipse cx="441.5" cy="189.5" rx="2.8" ry="5.3" fill="#b8901e" stroke="#6a5010" stroke-width="0.6" transform="rotate(47.4 441.5 189.5)"/><path d="M915.5 189.5 L878.1 230.3 Q870.4 238.6 872.5 250.8 L876.1 272.6" fill="none" stroke="#2a1f06" stroke-width="12" stroke-linejoin="round" transform="translate(0.3,0.3)"/><path d="M915.5 189.5 L878.1 230.3 Q870.4 238.6 872.5 250.8 L876.1 272.6" fill="none" stroke="#8e6c14" stroke-width="10.7" stroke-linejoin="round"/><path d="M915.5 189.5 L878.1 230.3 Q870.4 238.6 872.5 250.8 L876.1 272.6" fill="none" stroke="#aa821a" stroke-width="9.2" stroke-linejoin="round"/><path d="M915.5 189.5 L878.1 230.3 Q870.4 238.6 872.5 250.8 L876.1 272.6" fill="none" stroke="#bf9322" stroke-width="7.7" stroke-linejoin="round"/><path d="M915.5 189.5 L878.1 230.3 Q870.4 238.6 872.5 250.8 L876.1 272.6" fill="none" stroke="#cda028" stroke-width="6" stroke-linejoin="round"/><path d="M915.5 189.5 L878.1 230.3 Q870.4 238.6 872.5 250.8 L876.1 272.6" fill="none" stroke="#d5a82c" stroke-width="4.1" stroke-linejoin="round"/><ellipse cx="915.5" cy="189.5" rx="2.8" ry="5.3" fill="#b8901e" stroke="#6a5010" stroke-width="0.6" transform="rotate(132.6 915.5 189.5)"/><path d="M437.9 217 L476.3 257.8 Q484.1 266.1 482 278.4 L478.2 300.1" fill="none" stroke="#2a1f06" stroke-width="12.1" stroke-linejoin="round" transform="translate(0.3,0.3)"/><path d="M437.9 217 L476.3 257.8 Q484.1 266.1 482 278.4 L478.2 300.1" fill="none" stroke="#8e6c14" stroke-width="10.8" stroke-linejoin="round"/><path d="M437.9 217 L476.3 257.8 Q484.1 266.1 482 278.4 L478.2 300.1" fill="none" stroke="#aa821a" stroke-width="9.3" stroke-linejoin="round"/><path d="M437.9 217 L476.3 257.8 Q484.1 266.1 482 278.4 L478.2 300.1" fill="none" stroke="#bf9322" stroke-width="7.8" stroke-linejoin="round"/><path d="M437.9 217 L476.3 257.8 Q484.1 266.1 482 278.4 L478.2 300.1" fill="none" stroke="#cda028" stroke-width="6" stroke-linejoin="round"/><path d="M437.9 217 L476.3 257.8 Q484.1 266.1 482 278.4 L478.2 300.1" fill="none" stroke="#d5a82c" stroke-width="4.1" stroke-linejoin="round"/><ellipse cx="437.9" cy="217" rx="2.8" ry="5.4" fill="#b8901e" stroke="#6a5010" stroke-width="0.6" transform="rotate(46.8 437.9 217)"/><path d="M919.1 217 L880.7 257.8 Q872.9 266.1 875 278.4 L878.8 300.1" fill="none" stroke="#2a1f06" stroke-width="12.1" stroke-linejoin="round" transform="translate(0.3,0.3)"/><path d="M919.1 217 L880.7 257.8 Q872.9 266.1 875 278.4 L878.8 300.1" fill="none" stroke="#8e6c14" stroke-width="10.8" stroke-linejoin="round"/><path d="M919.1 217 L880.7 257.8 Q872.9 266.1 875 278.4 L878.8 300.1" fill="none" stroke="#aa821a" stroke-width="9.3" stroke-linejoin="round"/><path d="M919.1 217 L880.7 257.8 Q872.9 266.1 875 278.4 L878.8 300.1" fill="none" stroke="#bf9322" stroke-width="7.8" stroke-linejoin="round"/><path d="M919.1 217 L880.7 257.8 Q872.9 266.1 875 278.4 L878.8 300.1" fill="none" stroke="#cda028" stroke-width="6" stroke-linejoin="round"/><path d="M919.1 217 L880.7 257.8 Q872.9 266.1 875 278.4 L878.8 300.1" fill="none" stroke="#d5a82c" stroke-width="4.1" stroke-linejoin="round"/><ellipse cx="919.1" cy="217" rx="2.8" ry="5.4" fill="#b8901e" stroke="#6a5010" stroke-width="0.6" transform="rotate(133.2 919.1 217)"/><path d="M434.3 245.2 L473.5 286 Q481.6 294.4 479.4 306.6 L475.5 328.4" fill="none" stroke="#2a1f06" stroke-width="12.2" stroke-linejoin="round" transform="translate(0.3,0.3)"/><path d="M434.3 245.2 L473.5 286 Q481.6 294.4 479.4 306.6 L475.5 328.4" fill="none" stroke="#8e6c14" stroke-width="10.8" stroke-linejoin="round"/><path d="M434.3 245.2 L473.5 286 Q481.6 294.4 479.4 306.6 L475.5 328.4" fill="none" stroke="#aa821a" stroke-width="9.3" stroke-linejoin="round"/><path d="M434.3 245.2 L473.5 286 Q481.6 294.4 479.4 306.6 L475.5 328.4" fill="none" stroke="#bf9322" stroke-width="7.8" stroke-linejoin="round"/><path d="M434.3 245.2 L473.5 286 Q481.6 294.4 479.4 306.6 L475.5 328.4" fill="none" stroke="#cda028" stroke-width="6.1" stroke-linejoin="round"/><path d="M434.3 245.2 L473.5 286 Q481.6 294.4 479.4 306.6 L475.5 328.4" fill="none" stroke="#d5a82c" stroke-width="4.1" stroke-linejoin="round"/><ellipse cx="434.3" cy="245.2" rx="2.8" ry="5.4" fill="#b8901e" stroke="#6a5010" stroke-width="0.6" transform="rotate(46.2 434.3 245.2)"/><path d="M922.7 245.2 L883.5 286 Q875.4 294.4 877.6 306.6 L881.5 328.4" fill="none" stroke="#2a1f06" stroke-width="12.2" stroke-linejoin="round" transform="translate(0.3,0.3)"/><path d="M922.7 245.2 L883.5 286 Q875.4 294.4 877.6 306.6 L881.5 328.4" fill="none" stroke="#8e6c14" stroke-width="10.8" stroke-linejoin="round"/><path d="M922.7 245.2 L883.5 286 Q875.4 294.4 877.6 306.6 L881.5 328.4" fill="none" stroke="#aa821a" stroke-width="9.3" stroke-linejoin="round"/><path d="M922.7 245.2 L883.5 286 Q875.4 294.4 877.6 306.6 L881.5 328.4" fill="none" stroke="#bf9322" stroke-width="7.8" stroke-linejoin="round"/><path d="M922.7 245.2 L883.5 286 Q875.4 294.4 877.6 306.6 L881.5 328.4" fill="none" stroke="#cda028" stroke-width="6.1" stroke-linejoin="round"/><path d="M922.7 245.2 L883.5 286 Q875.4 294.4 877.6 306.6 L881.5 328.4" fill="none" stroke="#d5a82c" stroke-width="4.1" stroke-linejoin="round"/><ellipse cx="922.7" cy="245.2" rx="2.8" ry="5.4" fill="#b8901e" stroke="#6a5010" stroke-width="0.6" transform="rotate(133.8 922.7 245.2)"/><path d="M430.5 274.1 L470.7 315.1 Q478.9 323.5 476.7 335.7 L472.6 357.5" fill="none" stroke="#2a1f06" stroke-width="12.2" stroke-linejoin="round" transform="translate(0.3,0.3)"/><path d="M430.5 274.1 L470.7 315.1 Q478.9 323.5 476.7 335.7 L472.6 357.5" fill="none" stroke="#8e6c14" stroke-width="10.9" stroke-linejoin="round"/><path d="M430.5 274.1 L470.7 315.1 Q478.9 323.5 476.7 335.7 L472.6 357.5" fill="none" stroke="#aa821a" stroke-width="9.4" stroke-linejoin="round"/><path d="M430.5 274.1 L470.7 315.1 Q478.9 323.5 476.7 335.7 L472.6 357.5" fill="none" stroke="#bf9322" stroke-width="7.9" stroke-linejoin="round"/><path d="M430.5 274.1 L470.7 315.1 Q478.9 323.5 476.7 335.7 L472.6 357.5" fill="none" stroke="#cda028" stroke-width="6.1" stroke-linejoin="round"/><path d="M430.5 274.1 L470.7 315.1 Q478.9 323.5 476.7 335.7 L472.6 357.5" fill="none" stroke="#d5a82c" stroke-width="4.2" stroke-linejoin="round"/><ellipse cx="430.5" cy="274.1" rx="2.8" ry="5.5" fill="#b8901e" stroke="#6a5010" stroke-width="0.6" transform="rotate(45.5 430.5 274.1)"/><path d="M926.5 274.1 L886.3 315.1 Q878.1 323.5 880.3 335.7 L884.4 357.5" fill="none" stroke="#2a1f06" stroke-width="12.2" stroke-linejoin="round" transform="translate(0.3,0.3)"/><path d="M926.5 274.1 L886.3 315.1 Q878.1 323.5 880.3 335.7 L884.4 357.5" fill="none" stroke="#8e6c14" stroke-width="10.9" stroke-linejoin="round"/><path d="M926.5 274.1 L886.3 315.1 Q878.1 323.5 880.3 335.7 L884.4 357.5" fill="none" stroke="#aa821a" stroke-width="9.4" stroke-linejoin="round"/><path d="M926.5 274.1 L886.3 315.1 Q878.1 323.5 880.3 335.7 L884.4 357.5" fill="none" stroke="#bf9322" stroke-width="7.9" stroke-linejoin="round"/><path d="M926.5 274.1 L886.3 315.1 Q878.1 323.5 880.3 335.7 L884.4 357.5" fill="none" stroke="#cda028" stroke-width="6.1" stroke-linejoin="round"/><path d="M926.5 274.1 L886.3 315.1 Q878.1 323.5 880.3 335.7 L884.4 357.5" fill="none" stroke="#d5a82c" stroke-width="4.2" stroke-linejoin="round"/><ellipse cx="926.5" cy="274.1" rx="2.8" ry="5.5" fill="#b8901e" stroke="#6a5010" stroke-width="0.6" transform="rotate(134.5 926.5 274.1)"/><path d="M426.6 303.9 L467.8 345 Q476.2 353.4 473.9 365.6 L469.7 387.4" fill="none" stroke="#2a1f06" stroke-width="12.3" stroke-linejoin="round" transform="translate(0.3,0.3)"/><path d="M426.6 303.9 L467.8 345 Q476.2 353.4 473.9 365.6 L469.7 387.4" fill="none" stroke="#8e6c14" stroke-width="11" stroke-linejoin="round"/><path d="M426.6 303.9 L467.8 345 Q476.2 353.4 473.9 365.6 L469.7 387.4" fill="none" stroke="#aa821a" stroke-width="9.5" stroke-linejoin="round"/><path d="M426.6 303.9 L467.8 345 Q476.2 353.4 473.9 365.6 L469.7 387.4" fill="none" stroke="#bf9322" stroke-width="7.9" stroke-linejoin="round"/><path d="M426.6 303.9 L467.8 345 Q476.2 353.4 473.9 365.6 L469.7 387.4" fill="none" stroke="#cda028" stroke-width="6.2" stroke-linejoin="round"/><path d="M426.6 303.9 L467.8 345 Q476.2 353.4 473.9 365.6 L469.7 387.4" fill="none" stroke="#d5a82c" stroke-width="4.2" stroke-linejoin="round"/><ellipse cx="426.6" cy="303.9" rx="2.9" ry="5.5" fill="#b8901e" stroke="#6a5010" stroke-width="0.6" transform="rotate(44.9 426.6 303.9)"/><path d="M930.4 303.9 L889.2 345 Q880.8 353.4 883.1 365.6 L887.3 387.4" fill="none" stroke="#2a1f06" stroke-width="12.3" stroke-linejoin="round" transform="translate(0.3,0.3)"/><path d="M930.4 303.9 L889.2 345 Q880.8 353.4 883.1 365.6 L887.3 387.4" fill="none" stroke="#8e6c14" stroke-width="11" stroke-linejoin="round"/><path d="M930.4 303.9 L889.2 345 Q880.8 353.4 883.1 365.6 L887.3 387.4" fill="none" stroke="#aa821a" stroke-width="9.5" stroke-linejoin="round"/><path d="M930.4 303.9 L889.2 345 Q880.8 353.4 883.1 365.6 L887.3 387.4" fill="none" stroke="#bf9322" stroke-width="7.9" stroke-linejoin="round"/><path d="M930.4 303.9 L889.2 345 Q880.8 353.4 883.1 365.6 L887.3 387.4" fill="none" stroke="#cda028" stroke-width="6.2" stroke-linejoin="round"/><path d="M930.4 303.9 L889.2 345 Q880.8 353.4 883.1 365.6 L887.3 387.4" fill="none" stroke="#d5a82c" stroke-width="4.2" stroke-linejoin="round"/><ellipse cx="930.4" cy="303.9" rx="2.9" ry="5.5" fill="#b8901e" stroke="#6a5010" stroke-width="0.6" transform="rotate(135.1 930.4 303.9)"/><path d="M422.6 334.6 L464.8 375.7 Q473.4 384.1 471 396.3 L466.7 418.1" fill="none" stroke="#2a1f06" stroke-width="12.4" stroke-linejoin="round" transform="translate(0.3,0.3)"/><path d="M422.6 334.6 L464.8 375.7 Q473.4 384.1 471 396.3 L466.7 418.1" fill="none" stroke="#8e6c14" stroke-width="11.1" stroke-linejoin="round"/><path d="M422.6 334.6 L464.8 375.7 Q473.4 384.1 471 396.3 L466.7 418.1" fill="none" stroke="#aa821a" stroke-width="9.5" stroke-linejoin="round"/><path d="M422.6 334.6 L464.8 375.7 Q473.4 384.1 471 396.3 L466.7 418.1" fill="none" stroke="#bf9322" stroke-width="8" stroke-linejoin="round"/><path d="M422.6 334.6 L464.8 375.7 Q473.4 384.1 471 396.3 L466.7 418.1" fill="none" stroke="#cda028" stroke-width="6.2" stroke-linejoin="round"/><path d="M422.6 334.6 L464.8 375.7 Q473.4 384.1 471 396.3 L466.7 418.1" fill="none" stroke="#d5a82c" stroke-width="4.2" stroke-linejoin="round"/><ellipse cx="422.6" cy="334.6" rx="2.9" ry="5.5" fill="#b8901e" stroke="#6a5010" stroke-width="0.6" transform="rotate(44.2 422.6 334.6)"/><path d="M934.4 334.6 L892.2 375.7 Q883.6 384.1 886 396.3 L890.3 418.1" fill="none" stroke="#2a1f06" stroke-width="12.4" stroke-linejoin="round" transform="translate(0.3,0.3)"/><path d="M934.4 334.6 L892.2 375.7 Q883.6 384.1 886 396.3 L890.3 418.1" fill="none" stroke="#8e6c14" stroke-width="11.1" stroke-linejoin="round"/><path d="M934.4 334.6 L892.2 375.7 Q883.6 384.1 886 396.3 L890.3 418.1" fill="none" stroke="#aa821a" stroke-width="9.5" stroke-linejoin="round"/><path d="M934.4 334.6 L892.2 375.7 Q883.6 384.1 886 396.3 L890.3 418.1" fill="none" stroke="#bf9322" stroke-width="8" stroke-linejoin="round"/><path d="M934.4 334.6 L892.2 375.7 Q883.6 384.1 886 396.3 L890.3 418.1" fill="none" stroke="#cda028" stroke-width="6.2" stroke-linejoin="round"/><path d="M934.4 334.6 L892.2 375.7 Q883.6 384.1 886 396.3 L890.3 418.1" fill="none" stroke="#d5a82c" stroke-width="4.2" stroke-linejoin="round"/><ellipse cx="934.4" cy="334.6" rx="2.9" ry="5.5" fill="#b8901e" stroke="#6a5010" stroke-width="0.6" transform="rotate(135.8 934.4 334.6)"/><path d="M418.5 366.2 L461.7 407.3 Q470.6 415.7 468.1 428 L463.7 449.7" fill="none" stroke="#2a1f06" stroke-width="12.5" stroke-linejoin="round" transform="translate(0.3,0.3)"/><path d="M418.5 366.2 L461.7 407.3 Q470.6 415.7 468.1 428 L463.7 449.7" fill="none" stroke="#8e6c14" stroke-width="11.2" stroke-linejoin="round"/><path d="M418.5 366.2 L461.7 407.3 Q470.6 415.7 468.1 428 L463.7 449.7" fill="none" stroke="#aa821a" stroke-width="9.6" stroke-linejoin="round"/><path d="M418.5 366.2 L461.7 407.3 Q470.6 415.7 468.1 428 L463.7 449.7" fill="none" stroke="#bf9322" stroke-width="8.1" stroke-linejoin="round"/><path d="M418.5 366.2 L461.7 407.3 Q470.6 415.7 468.1 428 L463.7 449.7" fill="none" stroke="#cda028" stroke-width="6.3" stroke-linejoin="round"/><path d="M418.5 366.2 L461.7 407.3 Q470.6 415.7 468.1 428 L463.7 449.7" fill="none" stroke="#d5a82c" stroke-width="4.2" stroke-linejoin="round"/><ellipse cx="418.5" cy="366.2" rx="2.9" ry="5.6" fill="#b8901e" stroke="#6a5010" stroke-width="0.6" transform="rotate(43.6 418.5 366.2)"/><path d="M938.5 366.2 L895.3 407.3 Q886.4 415.7 888.9 428 L893.3 449.7" fill="none" stroke="#2a1f06" stroke-width="12.5" stroke-linejoin="round" transform="translate(0.3,0.3)"/><path d="M938.5 366.2 L895.3 407.3 Q886.4 415.7 888.9 428 L893.3 449.7" fill="none" stroke="#8e6c14" stroke-width="11.2" stroke-linejoin="round"/><path d="M938.5 366.2 L895.3 407.3 Q886.4 415.7 888.9 428 L893.3 449.7" fill="none" stroke="#aa821a" stroke-width="9.6" stroke-linejoin="round"/><path d="M938.5 366.2 L895.3 407.3 Q886.4 415.7 888.9 428 L893.3 449.7" fill="none" stroke="#bf9322" stroke-width="8.1" stroke-linejoin="round"/><path d="M938.5 366.2 L895.3 407.3 Q886.4 415.7 888.9 428 L893.3 449.7" fill="none" stroke="#cda028" stroke-width="6.3" stroke-linejoin="round"/><path d="M938.5 366.2 L895.3 407.3 Q886.4 415.7 888.9 428 L893.3 449.7" fill="none" stroke="#d5a82c" stroke-width="4.2" stroke-linejoin="round"/><ellipse cx="938.5" cy="366.2" rx="2.9" ry="5.6" fill="#b8901e" stroke="#6a5010" stroke-width="0.6" transform="rotate(136.4 938.5 366.2)"/><path d="M414.2 398.6 L458.6 439.9 Q467.6 448.3 465.1 460.6 L460.5 482.3" fill="none" stroke="#2a1f06" stroke-width="12.6" stroke-linejoin="round" transform="translate(0.3,0.3)"/><path d="M414.2 398.6 L458.6 439.9 Q467.6 448.3 465.1 460.6 L460.5 482.3" fill="none" stroke="#8e6c14" stroke-width="11.3" stroke-linejoin="round"/><path d="M414.2 398.6 L458.6 439.9 Q467.6 448.3 465.1 460.6 L460.5 482.3" fill="none" stroke="#aa821a" stroke-width="9.7" stroke-linejoin="round"/><path d="M414.2 398.6 L458.6 439.9 Q467.6 448.3 465.1 460.6 L460.5 482.3" fill="none" stroke="#bf9322" stroke-width="8.1" stroke-linejoin="round"/><path d="M414.2 398.6 L458.6 439.9 Q467.6 448.3 465.1 460.6 L460.5 482.3" fill="none" stroke="#cda028" stroke-width="6.3" stroke-linejoin="round"/><path d="M414.2 398.6 L458.6 439.9 Q467.6 448.3 465.1 460.6 L460.5 482.3" fill="none" stroke="#d5a82c" stroke-width="4.3" stroke-linejoin="round"/><ellipse cx="414.2" cy="398.6" rx="2.9" ry="5.6" fill="#b8901e" stroke="#6a5010" stroke-width="0.6" transform="rotate(42.9 414.2 398.6)"/><path d="M942.8 398.6 L898.4 439.9 Q889.4 448.3 891.9 460.6 L896.5 482.3" fill="none" stroke="#2a1f06" stroke-width="12.6" stroke-linejoin="round" transform="translate(0.3,0.3)"/><path d="M942.8 398.6 L898.4 439.9 Q889.4 448.3 891.9 460.6 L896.5 482.3" fill="none" stroke="#8e6c14" stroke-width="11.3" stroke-linejoin="round"/><path d="M942.8 398.6 L898.4 439.9 Q889.4 448.3 891.9 460.6 L896.5 482.3" fill="none" stroke="#aa821a" stroke-width="9.7" stroke-linejoin="round"/><path d="M942.8 398.6 L898.4 439.9 Q889.4 448.3 891.9 460.6 L896.5 482.3" fill="none" stroke="#bf9322" stroke-width="8.1" stroke-linejoin="round"/><path d="M942.8 398.6 L898.4 439.9 Q889.4 448.3 891.9 460.6 L896.5 482.3" fill="none" stroke="#cda028" stroke-width="6.3" stroke-linejoin="round"/><path d="M942.8 398.6 L898.4 439.9 Q889.4 448.3 891.9 460.6 L896.5 482.3" fill="none" stroke="#d5a82c" stroke-width="4.3" stroke-linejoin="round"/><ellipse cx="942.8" cy="398.6" rx="2.9" ry="5.6" fill="#b8901e" stroke="#6a5010" stroke-width="0.6" transform="rotate(137.1 942.8 398.6)"/><path d="M409.9 432.1 L455.3 473.4 Q464.6 481.9 462 494.1 L457.2 515.9" fill="none" stroke="#2a1f06" stroke-width="12.7" stroke-linejoin="round" transform="translate(0.3,0.3)"/><path d="M409.9 432.1 L455.3 473.4 Q464.6 481.9 462 494.1 L457.2 515.9" fill="none" stroke="#8e6c14" stroke-width="11.3" stroke-linejoin="round"/><path d="M409.9 432.1 L455.3 473.4 Q464.6 481.9 462 494.1 L457.2 515.9" fill="none" stroke="#aa821a" stroke-width="9.8" stroke-linejoin="round"/><path d="M409.9 432.1 L455.3 473.4 Q464.6 481.9 462 494.1 L457.2 515.9" fill="none" stroke="#bf9322" stroke-width="8.2" stroke-linejoin="round"/><path d="M409.9 432.1 L455.3 473.4 Q464.6 481.9 462 494.1 L457.2 515.9" fill="none" stroke="#cda028" stroke-width="6.4" stroke-linejoin="round"/><path d="M409.9 432.1 L455.3 473.4 Q464.6 481.9 462 494.1 L457.2 515.9" fill="none" stroke="#d5a82c" stroke-width="4.3" stroke-linejoin="round"/><ellipse cx="409.9" cy="432.1" rx="3" ry="5.7" fill="#b8901e" stroke="#6a5010" stroke-width="0.6" transform="rotate(42.3 409.9 432.1)"/><path d="M947.1 432.1 L901.7 473.4 Q892.4 481.9 895 494.1 L899.8 515.9" fill="none" stroke="#2a1f06" stroke-width="12.7" stroke-linejoin="round" transform="translate(0.3,0.3)"/><path d="M947.1 432.1 L901.7 473.4 Q892.4 481.9 895 494.1 L899.8 515.9" fill="none" stroke="#8e6c14" stroke-width="11.3" stroke-linejoin="round"/><path d="M947.1 432.1 L901.7 473.4 Q892.4 481.9 895 494.1 L899.8 515.9" fill="none" stroke="#aa821a" stroke-width="9.8" stroke-linejoin="round"/><path d="M947.1 432.1 L901.7 473.4 Q892.4 481.9 895 494.1 L899.8 515.9" fill="none" stroke="#bf9322" stroke-width="8.2" stroke-linejoin="round"/><path d="M947.1 432.1 L901.7 473.4 Q892.4 481.9 895 494.1 L899.8 515.9" fill="none" stroke="#cda028" stroke-width="6.4" stroke-linejoin="round"/><path d="M947.1 432.1 L901.7 473.4 Q892.4 481.9 895 494.1 L899.8 515.9" fill="none" stroke="#d5a82c" stroke-width="4.3" stroke-linejoin="round"/><ellipse cx="947.1" cy="432.1" rx="3" ry="5.7" fill="#b8901e" stroke="#6a5010" stroke-width="0.6" transform="rotate(137.7 947.1 432.1)"/><path d="M405.4 466.6 L451.9 508 Q461.5 516.4 458.7 528.7 L453.9 550.4" fill="none" stroke="#2a1f06" stroke-width="12.7" stroke-linejoin="round" transform="translate(0.3,0.3)"/><path d="M405.4 466.6 L451.9 508 Q461.5 516.4 458.7 528.7 L453.9 550.4" fill="none" stroke="#8e6c14" stroke-width="11.4" stroke-linejoin="round"/><path d="M405.4 466.6 L451.9 508 Q461.5 516.4 458.7 528.7 L453.9 550.4" fill="none" stroke="#aa821a" stroke-width="9.8" stroke-linejoin="round"/><path d="M405.4 466.6 L451.9 508 Q461.5 516.4 458.7 528.7 L453.9 550.4" fill="none" stroke="#bf9322" stroke-width="8.2" stroke-linejoin="round"/><path d="M405.4 466.6 L451.9 508 Q461.5 516.4 458.7 528.7 L453.9 550.4" fill="none" stroke="#cda028" stroke-width="6.4" stroke-linejoin="round"/><path d="M405.4 466.6 L451.9 508 Q461.5 516.4 458.7 528.7 L453.9 550.4" fill="none" stroke="#d5a82c" stroke-width="4.3" stroke-linejoin="round"/><ellipse cx="405.4" cy="466.6" rx="3" ry="5.7" fill="#b8901e" stroke="#6a5010" stroke-width="0.6" transform="rotate(41.6 405.4 466.6)"/><path d="M951.6 466.6 L905.1 508 Q895.5 516.4 898.3 528.7 L903.1 550.4" fill="none" stroke="#2a1f06" stroke-width="12.7" stroke-linejoin="round" transform="translate(0.3,0.3)"/><path d="M951.6 466.6 L905.1 508 Q895.5 516.4 898.3 528.7 L903.1 550.4" fill="none" stroke="#8e6c14" stroke-width="11.4" stroke-linejoin="round"/><path d="M951.6 466.6 L905.1 508 Q895.5 516.4 898.3 528.7 L903.1 550.4" fill="none" stroke="#aa821a" stroke-width="9.8" stroke-linejoin="round"/><path d="M951.6 466.6 L905.1 508 Q895.5 516.4 898.3 528.7 L903.1 550.4" fill="none" stroke="#bf9322" stroke-width="8.2" stroke-linejoin="round"/><path d="M951.6 466.6 L905.1 508 Q895.5 516.4 898.3 528.7 L903.1 550.4" fill="none" stroke="#cda028" stroke-width="6.4" stroke-linejoin="round"/><path d="M951.6 466.6 L905.1 508 Q895.5 516.4 898.3 528.7 L903.1 550.4" fill="none" stroke="#d5a82c" stroke-width="4.3" stroke-linejoin="round"/><ellipse cx="951.6" cy="466.6" rx="3" ry="5.7" fill="#b8901e" stroke="#6a5010" stroke-width="0.6" transform="rotate(138.4 951.6 466.6)"/><path d="M400.7 502.1 L448.5 543.6 Q458.3 552.1 455.4 564.3 L450.4 586.1" fill="none" stroke="#2a1f06" stroke-width="12.8" stroke-linejoin="round" transform="translate(0.3,0.3)"/><path d="M400.7 502.1 L448.5 543.6 Q458.3 552.1 455.4 564.3 L450.4 586.1" fill="none" stroke="#8e6c14" stroke-width="11.5" stroke-linejoin="round"/><path d="M400.7 502.1 L448.5 543.6 Q458.3 552.1 455.4 564.3 L450.4 586.1" fill="none" stroke="#aa821a" stroke-width="9.9" stroke-linejoin="round"/><path d="M400.7 502.1 L448.5 543.6 Q458.3 552.1 455.4 564.3 L450.4 586.1" fill="none" stroke="#bf9322" stroke-width="8.3" stroke-linejoin="round"/><path d="M400.7 502.1 L448.5 543.6 Q458.3 552.1 455.4 564.3 L450.4 586.1" fill="none" stroke="#cda028" stroke-width="6.4" stroke-linejoin="round"/><path d="M400.7 502.1 L448.5 543.6 Q458.3 552.1 455.4 564.3 L450.4 586.1" fill="none" stroke="#d5a82c" stroke-width="4.4" stroke-linejoin="round"/><ellipse cx="400.7" cy="502.1" rx="3" ry="5.8" fill="#b8901e" stroke="#6a5010" stroke-width="0.6" transform="rotate(40.9 400.7 502.1)"/><path d="M956.3 502.1 L908.5 543.6 Q898.7 552.1 901.6 564.3 L906.6 586.1" fill="none" stroke="#2a1f06" stroke-width="12.8" stroke-linejoin="round" transform="translate(0.3,0.3)"/><path d="M956.3 502.1 L908.5 543.6 Q898.7 552.1 901.6 564.3 L906.6 586.1" fill="none" stroke="#8e6c14" stroke-width="11.5" stroke-linejoin="round"/><path d="M956.3 502.1 L908.5 543.6 Q898.7 552.1 901.6 564.3 L906.6 586.1" fill="none" stroke="#aa821a" stroke-width="9.9" stroke-linejoin="round"/><path d="M956.3 502.1 L908.5 543.6 Q898.7 552.1 901.6 564.3 L906.6 586.1" fill="none" stroke="#bf9322" stroke-width="8.3" stroke-linejoin="round"/><path d="M956.3 502.1 L908.5 543.6 Q898.7 552.1 901.6 564.3 L906.6 586.1" fill="none" stroke="#cda028" stroke-width="6.4" stroke-linejoin="round"/><path d="M956.3 502.1 L908.5 543.6 Q898.7 552.1 901.6 564.3 L906.6 586.1" fill="none" stroke="#d5a82c" stroke-width="4.4" stroke-linejoin="round"/><ellipse cx="956.3" cy="502.1" rx="3" ry="5.8" fill="#b8901e" stroke="#6a5010" stroke-width="0.6" transform="rotate(139.1 956.3 502.1)"/><path d="M395.9 538.8 L444.9 580.3 Q454.9 588.8 452 601 L446.8 622.8" fill="none" stroke="#2a1f06" stroke-width="12.9" stroke-linejoin="round" transform="translate(0.3,0.3)"/><path d="M395.9 538.8 L444.9 580.3 Q454.9 588.8 452 601 L446.8 622.8" fill="none" stroke="#8e6c14" stroke-width="11.6" stroke-linejoin="round"/><path d="M395.9 538.8 L444.9 580.3 Q454.9 588.8 452 601 L446.8 622.8" fill="none" stroke="#aa821a" stroke-width="10" stroke-linejoin="round"/><path d="M395.9 538.8 L444.9 580.3 Q454.9 588.8 452 601 L446.8 622.8" fill="none" stroke="#bf9322" stroke-width="8.4" stroke-linejoin="round"/><path d="M395.9 538.8 L444.9 580.3 Q454.9 588.8 452 601 L446.8 622.8" fill="none" stroke="#cda028" stroke-width="6.5" stroke-linejoin="round"/><path d="M395.9 538.8 L444.9 580.3 Q454.9 588.8 452 601 L446.8 622.8" fill="none" stroke="#d5a82c" stroke-width="4.4" stroke-linejoin="round"/><ellipse cx="395.9" cy="538.8" rx="3" ry="5.8" fill="#b8901e" stroke="#6a5010" stroke-width="0.6" transform="rotate(40.3 395.9 538.8)"/><path d="M961.1 538.8 L912.1 580.3 Q902.1 588.8 905 601 L910.2 622.8" fill="none" stroke="#2a1f06" stroke-width="12.9" stroke-linejoin="round" transform="translate(0.3,0.3)"/><path d="M961.1 538.8 L912.1 580.3 Q902.1 588.8 905 601 L910.2 622.8" fill="none" stroke="#8e6c14" stroke-width="11.6" stroke-linejoin="round"/><path d="M961.1 538.8 L912.1 580.3 Q902.1 588.8 905 601 L910.2 622.8" fill="none" stroke="#aa821a" stroke-width="10" stroke-linejoin="round"/><path d="M961.1 538.8 L912.1 580.3 Q902.1 588.8 905 601 L910.2 622.8" fill="none" stroke="#bf9322" stroke-width="8.4" stroke-linejoin="round"/><path d="M961.1 538.8 L912.1 580.3 Q902.1 588.8 905 601 L910.2 622.8" fill="none" stroke="#cda028" stroke-width="6.5" stroke-linejoin="round"/><path d="M961.1 538.8 L912.1 580.3 Q902.1 588.8 905 601 L910.2 622.8" fill="none" stroke="#d5a82c" stroke-width="4.4" stroke-linejoin="round"/><ellipse cx="961.1" cy="538.8" rx="3" ry="5.8" fill="#b8901e" stroke="#6a5010" stroke-width="0.6" transform="rotate(139.7 961.1 538.8)"/><path d="M466 645 L481.6 645 L482.4 721 L469.8 721Z" fill="#2a2008"/><path d="M464.5 624 Q473.8 631 473.8 646" fill="none" stroke="#2a2008" stroke-width="15"/><path d="M464.5 624 Q473.8 631 473.8 646" fill="none" stroke="#c99a24" stroke-width="13.5"/><path d="M466.9 645 L480.7 645 L481.5 720 L470.7 720Z" fill="url(#pinV)"/><path d="M464.5 624 Q473.8 631 473.8 647" fill="none" stroke="url(#pinTop)" stroke-width="14"/><ellipse cx="464.5" cy="623.5" rx="7" ry="6.8" fill="#f8c830"/><path d="M463.9 836 L465.1 849 Q466.6 859 474.3 859 Q482 859 483.5 849 L484.7 836Z" fill="#2a2008"/><path d="M464.7 836 L465.7 849 Q467.1 857.8 474.3 857.8 Q481.5 857.8 482.9 849 L483.9 836Z" fill="url(#stubL)"/><path d="M517.2 645 L532.8 645 L533 721 L520.4 721Z" fill="#2a2008"/><path d="M518 624 Q525 631 525 646" fill="none" stroke="#2a2008" stroke-width="15"/><path d="M518 624 Q525 631 525 646" fill="none" stroke="#c99a24" stroke-width="13.5"/><path d="M518.1 645 L531.9 645 L532.1 720 L521.3 720Z" fill="url(#pinV)"/><path d="M518 624 Q525 631 525 647" fill="none" stroke="url(#pinTop)" stroke-width="14"/><ellipse cx="518" cy="623.5" rx="7" ry="6.8" fill="#f8c830"/><path d="M515.6 836 L516.6 849 Q518.1 859 525.4 859 Q532.6 859 534.1 849 L535.1 836Z" fill="#2a2008"/><path d="M516.4 836 L517.2 849 Q518.6 857.8 525.4 857.8 Q532.1 857.8 533.5 849 L534.4 836Z" fill="url(#stubL)"/><path d="M568.4 645 L584 645 L583.6 721 L571 721Z" fill="#2a2008"/><path d="M571.5 624 Q576.2 631 576.2 646" fill="none" stroke="#2a2008" stroke-width="15"/><path d="M571.5 624 Q576.2 631 576.2 646" fill="none" stroke="#c99a24" stroke-width="13.5"/><path d="M569.3 645 L583.1 645 L582.7 720 L571.9 720Z" fill="url(#pinV)"/><path d="M571.5 624 Q576.2 631 576.2 647" fill="none" stroke="url(#pinTop)" stroke-width="14"/><ellipse cx="571.5" cy="623.5" rx="7" ry="6.8" fill="#f8c830"/><path d="M567.2 836 L568.2 849 Q569.7 859 576.4 859 Q583.1 859 584.6 849 L585.6 836Z" fill="#2a2008"/><path d="M568 836 L568.8 849 Q570.1 857.8 576.4 857.8 Q582.7 857.8 584 849 L584.8 836Z" fill="url(#stubL)"/><path d="M619.6 645 L635.2 645 L634.2 721 L621.6 721Z" fill="#2a2008"/><path d="M625 624 Q627.4 631 627.4 646" fill="none" stroke="#2a2008" stroke-width="15"/><path d="M625 624 Q627.4 631 627.4 646" fill="none" stroke="#c99a24" stroke-width="13.5"/><path d="M620.5 645 L634.3 645 L633.3 720 L622.5 720Z" fill="url(#pinV)"/><path d="M625 624 Q627.4 631 627.4 647" fill="none" stroke="url(#pinTop)" stroke-width="14"/><ellipse cx="625" cy="623.5" rx="7" ry="6.8" fill="#f8c830"/><path d="M618.9 836 L619.8 849 Q621.2 859 627.5 859 Q633.7 859 635.1 849 L636 836Z" fill="#2a2008"/><path d="M619.7 836 L620.4 849 Q621.6 857.8 627.5 857.8 Q633.3 857.8 634.5 849 L635.2 836Z" fill="url(#stubL)"/><path d="M670.8 645 L686.4 645 L684.8 721 L672.2 721Z" fill="#2a2008"/><path d="M678.5 624 Q678.6 631 678.6 646" fill="none" stroke="#2a2008" stroke-width="15"/><path d="M678.5 624 Q678.6 631 678.6 646" fill="none" stroke="#c99a24" stroke-width="13.5"/><path d="M671.7 645 L685.5 645 L683.9 720 L673.1 720Z" fill="url(#pinV)"/><path d="M678.5 624 Q678.6 631 678.6 647" fill="none" stroke="url(#pinTop)" stroke-width="14"/><ellipse cx="678.5" cy="623.5" rx="7" ry="6.8" fill="#f8c830"/><path d="M670.5 836 L671.4 849 Q672.7 859 678.5 859 Q684.3 859 685.6 849 L686.5 836Z" fill="#2a2008"/><path d="M671.3 836 L672 849 Q673.1 857.8 678.5 857.8 Q683.9 857.8 685 849 L685.7 836Z" fill="url(#stubC)"/><path d="M722 645 L737.6 645 L735.4 721 L722.8 721Z" fill="#2a2008"/><path d="M732 624 Q729.8 631 729.8 646" fill="none" stroke="#2a2008" stroke-width="15"/><path d="M732 624 Q729.8 631 729.8 646" fill="none" stroke="#c99a24" stroke-width="13.5"/><path d="M722.9 645 L736.7 645 L734.5 720 L723.7 720Z" fill="url(#pinV)"/><path d="M732 624 Q729.8 631 729.8 647" fill="none" stroke="url(#pinTop)" stroke-width="14"/><ellipse cx="732" cy="623.5" rx="7" ry="6.8" fill="#f8c830"/><path d="M721 836 L721.9 849 Q723.3 859 729.5 859 Q735.8 859 737.2 849 L738.1 836Z" fill="#2a2008"/><path d="M721.8 836 L722.5 849 Q723.7 857.8 729.5 857.8 Q735.4 857.8 736.6 849 L737.3 836Z" fill="url(#stubR)"/><path d="M773.2 645 L788.8 645 L786 721 L773.4 721Z" fill="#2a2008"/><path d="M785.5 624 Q781 631 781 646" fill="none" stroke="#2a2008" stroke-width="15"/><path d="M785.5 624 Q781 631 781 646" fill="none" stroke="#c99a24" stroke-width="13.5"/><path d="M774.1 645 L787.9 645 L785.1 720 L774.3 720Z" fill="url(#pinV)"/><path d="M785.5 624 Q781 631 781 647" fill="none" stroke="url(#pinTop)" stroke-width="14"/><ellipse cx="785.5" cy="623.5" rx="7" ry="6.8" fill="#f8c830"/><path d="M771.4 836 L772.4 849 Q773.9 859 780.6 859 Q787.3 859 788.8 849 L789.8 836Z" fill="#2a2008"/><path d="M772.2 836 L773 849 Q774.3 857.8 780.6 857.8 Q786.9 857.8 788.2 849 L789 836Z" fill="url(#stubR)"/><path d="M824.4 645 L840 645 L836.6 721 L824 721Z" fill="#2a2008"/><path d="M839 624 Q832.2 631 832.2 646" fill="none" stroke="#2a2008" stroke-width="15"/><path d="M839 624 Q832.2 631 832.2 646" fill="none" stroke="#c99a24" stroke-width="13.5"/><path d="M825.3 645 L839.1 645 L835.7 720 L824.9 720Z" fill="url(#pinV)"/><path d="M839 624 Q832.2 631 832.2 647" fill="none" stroke="url(#pinTop)" stroke-width="14"/><ellipse cx="839" cy="623.5" rx="7" ry="6.8" fill="#f8c830"/><path d="M821.9 836 L822.9 849 Q824.4 859 831.6 859 Q838.9 859 840.4 849 L841.4 836Z" fill="#2a2008"/><path d="M822.6 836 L823.5 849 Q824.9 857.8 831.6 857.8 Q838.4 857.8 839.8 849 L840.6 836Z" fill="url(#stubR)"/><path d="M875.6 645 L891.2 645 L887.2 721 L874.6 721Z" fill="#2a2008"/><path d="M892.5 624 Q883.4 631 883.4 646" fill="none" stroke="#2a2008" stroke-width="15"/><path d="M892.5 624 Q883.4 631 883.4 646" fill="none" stroke="#c99a24" stroke-width="13.5"/><path d="M876.5 645 L890.3 645 L886.3 720 L875.5 720Z" fill="url(#pinV)"/><path d="M892.5 624 Q883.4 631 883.4 647" fill="none" stroke="url(#pinTop)" stroke-width="14"/><ellipse cx="892.5" cy="623.5" rx="7" ry="6.8" fill="#f8c830"/><path d="M872.3 836 L873.5 849 Q875 859 882.7 859 Q890.4 859 891.9 849 L893.1 836Z" fill="#2a2008"/><path d="M873.1 836 L874.1 849 Q875.5 857.8 882.7 857.8 Q889.9 857.8 891.3 849 L892.3 836Z" fill="url(#stubR)"/><path d="M263 801 L1094 801 L1086 840 L271 840Z" fill="#7f7f4c"/><path d="M357.5 218.1 L263 801 L271 840 M1086 840 L1094 801 L999.5 218.1" fill="none" stroke="#3a3a3a" stroke-width="0.9" stroke-dasharray="2 1.5" opacity="0.8"/></svg>
<div class="abs shrink"></div>
<svg class="abs" style="left:34px;top:73px" width="38" height="38" viewBox="0 0 38 38">
<g stroke="#000" stroke-width="1.9" fill="none" stroke-linecap="butt">
<path d="M5.75 14.7 V6.1 H15.6"/>
<path d="M24.1 7 V15.9 H33 M24.1 15.9 L34.6 5.4"/>
<path d="M7 23.9 H16.1 V32.7 M16.1 23.9 L5.4 34.6"/>
<path d="M34.2 25.1 V34 H25"/>
</g></svg>
<div class="abs hint">提示：按住Alt键后，鼠标右键移动元件模型X、Y方向，鼠标中键移动元件模型Z方向，鼠标左键旋转元件模型</div>
<div class="abs tools"></div>
<div class="abs sep"></div>
<svg class="abs" style="left:1030px;top:73px" width="293" height="37" viewBox="1030 73 293 37">
<g stroke="#000" stroke-width="1.45" fill="none" stroke-linejoin="round">
<path d="M1044.3 82.4 L1044.3 95.2 L1057.4 95.2 M1039.5 99.1 L1044.3 95.2"/><path d="M1039.5 86.2 L1044.3 82.4 L1057.4 82.4 L1052.4 86.2Z" fill="#7cc0e6" stroke="none"/><path d="M1039.5 86.2 L1044.3 82.4 L1057.4 82.4 L1057.4 95.2 L1052.4 99.1 L1039.5 99.1Z"/><path d="M1039.5 86.2 L1052.4 86.2 L1052.4 99.1 M1052.4 86.2 L1057.4 82.4"/><path d="M1074.5 99.1 L1079.3 95.2 L1092.4 95.2 L1087.4 99.1Z" fill="#7cc0e6" stroke="none"/><path d="M1079.3 82.4 L1079.3 95.2 L1092.4 95.2 M1074.5 99.1 L1079.3 95.2"/><path d="M1074.5 86.2 L1079.3 82.4 L1092.4 82.4 L1092.4 95.2 L1087.4 99.1 L1074.5 99.1Z"/><path d="M1074.5 86.2 L1087.4 86.2 L1087.4 99.1 M1087.4 86.2 L1092.4 82.4"/><path d="M1122.4 86.2 L1127.4 82.4 L1127.4 95.2 L1122.4 99.1Z" fill="#7cc0e6" stroke="none"/><path d="M1114.3 82.4 L1114.3 95.2 L1127.4 95.2 M1109.5 99.1 L1114.3 95.2"/><path d="M1109.5 86.2 L1114.3 82.4 L1127.4 82.4 L1127.4 95.2 L1122.4 99.1 L1109.5 99.1Z"/><path d="M1109.5 86.2 L1122.4 86.2 L1122.4 99.1 M1122.4 86.2 L1127.4 82.4"/><path d="M1144.5 86.2 L1149.3 82.4 L1149.3 95.2 L1144.5 99.1Z" fill="#7cc0e6" stroke="none"/><path d="M1149.3 82.4 L1149.3 95.2 L1162.4 95.2 M1144.5 99.1 L1149.3 95.2"/><path d="M1144.5 86.2 L1149.3 82.4 L1162.4 82.4 L1162.4 95.2 L1157.4 99.1 L1144.5 99.1Z"/><path d="M1144.5 86.2 L1157.4 86.2 L1157.4 99.1 M1157.4 86.2 L1162.4 82.4"/><path d="M1179.5 86.2 L1192.4 86.2 L1192.4 99.1 L1179.5 99.1Z" fill="#7cc0e6" stroke="none"/><path d="M1179.5 86.2 L1184.3 82.4 L1197.4 82.4 L1197.4 95.2 L1192.4 99.1 L1179.5 99.1Z"/><path d="M1179.5 86.2 L1192.4 86.2 L1192.4 99.1 M1192.4 86.2 L1197.4 82.4"/><path d="M1219.3 82.4 L1232.4 82.4 L1232.4 95.2 L1219.3 95.2Z" fill="#7cc0e6" stroke="none"/><path d="M1219.3 82.4 L1219.3 95.2 L1232.4 95.2 M1214.5 99.1 L1219.3 95.2"/><path d="M1214.5 86.2 L1219.3 82.4 L1232.4 82.4 L1232.4 95.2 L1227.4 99.1 L1214.5 99.1Z"/><path d="M1214.5 86.2 L1227.4 86.2 L1227.4 99.1 M1227.4 86.2 L1232.4 82.4"/>
</g>
<g stroke="#111" stroke-width="1.6" fill="none" stroke-linecap="round">
<path d="M1258.5 86.8 V82.5 H1262.9 M1258.5 82.5 L1263.8 87.7"/>
<path d="M1276.4 86.8 V82.5 H1272.1 M1276.4 82.5 L1271.2 87.7"/>
<path d="M1258.5 96.2 V100.5 H1262.9 M1258.5 100.5 L1263.8 95.3"/>
<path d="M1276.4 96.2 V100.5 H1272.1 M1276.4 100.5 L1271.2 95.3"/>
<path d="M1258 82 L1261.5 82 L1258 85.5Z M1277 82 L1273.5 82 L1277 85.5Z M1258 101 L1261.5 101 L1258 97.5Z M1277 101 L1273.5 101 L1277 97.5Z" fill="#111" stroke="none"/>
<path d="M1297.6 82.6 A9.2 9.2 0 0 0 1300.9 99.9"/>
<path d="M1293.2 82.6 L1297.8 82.6 L1297.6 86.8"/>
<path d="M1303.3 82 A9.2 9.2 0 0 1 1307 99.5"/>
<path d="M1306.3 95.1 L1306.3 99.7 L1310.7 99.7"/>
</g></svg>

<div class="abs" style="left:1350px;top:71px;font-size:15px;line-height:20px;font-weight:bold;color:#333">校准</div>
<div class="abs" style="left:1400px;top:68px;width:52px;height:27px;border:1px solid #8f8f8f;border-radius:2px;font-size:15px;line-height:25px;text-align:center;color:#333">自动</div>
<div class="abs inp" style="left:1473px;top:66px;width:100px;height:30px;padding-left:11px">100%</div>

<div class="abs hdr" style="top:115px"></div>
<div class="abs tri" style="left:1351px;top:124px"></div>
<div class="abs hdrtxt" style="left:1365px;top:115px">大小</div>
<div class="abs lbl" style="left:1366px;top:156px">X</div>
<div class="abs inp" style="top:156px">19.65</div>
<div class="abs unit" style="top:157px">mm</div>
<div class="abs lbl" style="left:1366px;top:196px">Y</div>
<div class="abs inp" style="top:196px">21.346</div>
<div class="abs unit" style="top:197px">mm</div>
<div class="abs lbl" style="left:1366px;top:236px">Z</div>
<div class="abs inp" style="top:236px">7.058</div>
<div class="abs unit" style="top:237px">mm</div>

<div class="abs hdr" style="top:276px"></div>
<div class="abs tri" style="left:1351px;top:285px"></div>
<div class="abs hdrtxt" style="left:1365px;top:276px">旋转角度</div>
<div class="abs lbl" style="left:1366px;top:318px">X</div>
<div class="abs inp" style="top:318px">0</div>
<div class="abs unit" style="top:319px;font-size:15px">°</div>
<div class="abs lbl" style="left:1366px;top:358px">Y</div>
<div class="abs inp" style="top:358px">0</div>
<div class="abs unit" style="top:359px;font-size:15px">°</div>
<div class="abs lbl" style="left:1366px;top:398px">Z</div>
<div class="abs inp" style="top:398px">0</div>
<div class="abs unit" style="top:399px;font-size:15px">°</div>

<div class="abs hdr" style="top:437px"></div>
<div class="abs tri" style="left:1351px;top:446px"></div>
<div class="abs hdrtxt" style="left:1365px;top:437px">偏移</div>
<div class="abs lbl" style="left:1366px;top:479px">X</div>
<div class="abs inp" style="top:479px">0</div>
<div class="abs unit" style="top:480px">mm</div>
<div class="abs lbl" style="left:1366px;top:519px">Y</div>
<div class="abs inp" style="top:519px">-10.5</div>
<div class="abs unit" style="top:520px">mm</div>
<div class="abs lbl" style="left:1366px;top:559px">Z</div>
<div class="abs inp" style="top:559px">-3.9</div>
<div class="abs unit" style="top:560px">mm</div>
<svg class="abs" style="left:1511px;top:156px" width="16" height="30" viewBox="0 0 16 30"><path d="M1.7 14 L8 7.2 L14.3 14Z M1.7 17.8 L8 24.4 L14.3 17.8Z" fill="#111"/></svg><svg class="abs" style="left:1511px;top:196px" width="16" height="30" viewBox="0 0 16 30"><path d="M1.7 14 L8 7.2 L14.3 14Z M1.7 17.8 L8 24.4 L14.3 17.8Z" fill="#111"/></svg><svg class="abs" style="left:1511px;top:236px" width="16" height="30" viewBox="0 0 16 30"><path d="M1.7 14 L8 7.2 L14.3 14Z M1.7 17.8 L8 24.4 L14.3 17.8Z" fill="#111"/></svg><svg class="abs" style="left:1511px;top:318px" width="16" height="30" viewBox="0 0 16 30"><path d="M1.7 14 L8 7.2 L14.3 14Z M1.7 17.8 L8 24.4 L14.3 17.8Z" fill="#111"/></svg><svg class="abs" style="left:1511px;top:358px" width="16" height="30" viewBox="0 0 16 30"><path d="M1.7 14 L8 7.2 L14.3 14Z M1.7 17.8 L8 24.4 L14.3 17.8Z" fill="#111"/></svg><svg class="abs" style="left:1511px;top:398px" width="16" height="30" viewBox="0 0 16 30"><path d="M1.7 14 L8 7.2 L14.3 14Z M1.7 17.8 L8 24.4 L14.3 17.8Z" fill="#111"/></svg><svg class="abs" style="left:1511px;top:479px" width="16" height="30" viewBox="0 0 16 30"><path d="M1.7 14 L8 7.2 L14.3 14Z M1.7 17.8 L8 24.4 L14.3 17.8Z" fill="#111"/></svg><svg class="abs" style="left:1511px;top:519px" width="16" height="30" viewBox="0 0 16 30"><path d="M1.7 14 L8 7.2 L14.3 14Z M1.7 17.8 L8 24.4 L14.3 17.8Z" fill="#111"/></svg><svg class="abs" style="left:1511px;top:559px" width="16" height="30" viewBox="0 0 16 30"><path d="M1.7 14 L8 7.2 L14.3 14Z M1.7 17.8 L8 24.4 L14.3 17.8Z" fill="#111"/></svg>

<div class="abs btn1">更新</div>
<div class="abs btn2">取消</div>
</body></html>
